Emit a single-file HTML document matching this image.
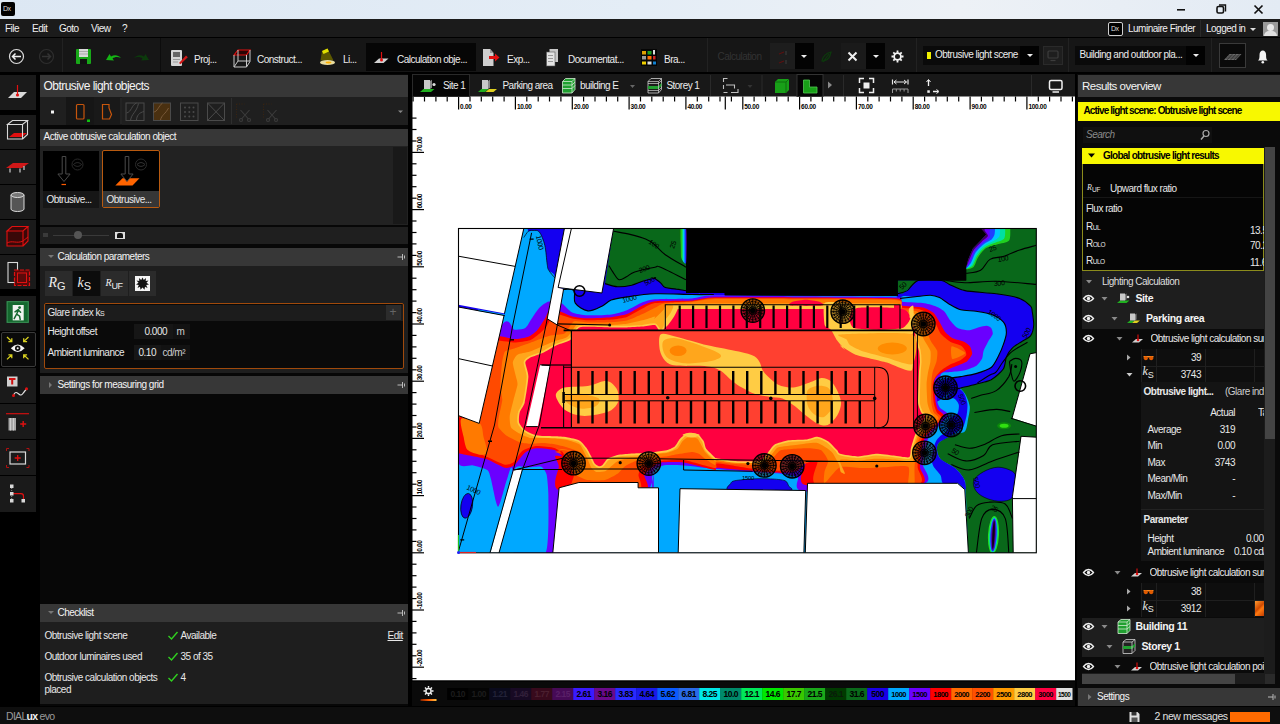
<!DOCTYPE html>
<html><head><meta charset="utf-8"><title>DIALux evo</title>
<style>
*{box-sizing:border-box;margin:0;padding:0}
html,body{width:1280px;height:724px;overflow:hidden;background:#000;font-family:"Liberation Sans",sans-serif;font-size:10px;color:#e8e8e8;letter-spacing:-0.5px}
.a{position:absolute}
.t{position:absolute;white-space:nowrap;line-height:12px}
#title{left:0;top:0;width:1280px;height:19px;background:linear-gradient(90deg,#dce7f3 0%,#e4edf6 50%,#edf1f6 75%,#e3ebf4 100%)}
#menu{left:0;top:19px;width:1280px;height:18px;background:#1b1b1b}
#tbar{left:0;top:38px;width:1280px;height:34px;background:#161616}
#strip{left:0;top:74px;width:38px;height:632px;background:#000}
#lpanel{left:39.500px;top:74px;width:368px;height:632px;background:#070707;overflow:hidden}
#view{left:412px;top:74px;width:663px;height:632px;background:#fff}
#rpanel{left:1077px;top:74px;width:203px;height:632px;background:#0a0a0a}
#status{left:0;top:706.500px;width:1280px;height:18px;background:#0e0e0e}
.m{top:3.500px;color:#f0f0f0}
.b{top:15.500px;color:#ececec}
.bb{font-weight:bold;font-size:10.500px;letter-spacing:-0.4px;color:#f4f4f4}
.r{left:100px;width:58px;text-align:right}
.hdr{position:absolute;background:#373737;color:#f2f2f2}
</style></head><body>

<div id="title" class="a">
 <div class="a" style="left:1px;top:2px;width:14px;height:14px;background:#000;border-radius:2px"></div>
 <div class="t" style="left:3px;top:4px;font-size:7px;color:#ddd;letter-spacing:-0.5px;line-height:10px">Dx</div>
 <svg class="a" style="left:1170px;top:0" width="110" height="19" viewBox="0 0 110 19">
  <rect x="7" y="9" width="8" height="1.6" fill="#111"/>
  <rect x="47" y="6.5" width="6.5" height="6.5" rx="1.5" fill="none" stroke="#111" stroke-width="1.6"/>
  <path d="M49 5h6.5v6.5" fill="none" stroke="#111" stroke-width="1.4"/>
  <path d="M84.500 5.500l8 8M92.500 5.500l-8 8" stroke="#111" stroke-width="1.700"/>
 </svg>
</div>
<div id="menu" class="a">
 <div class="t m" style="left:5px">File</div><div class="t m" style="left:32px">Edit</div><div class="t m" style="left:59px">Goto</div><div class="t m" style="left:91px">View</div><div class="t m" style="left:122px">?</div>
 <div class="a" style="left:1108px;top:3px;width:15px;height:14px;border:1px solid #cfcfcf;border-radius:2px;background:#000"></div>
 <div class="t" style="left:1111px;top:5px;font-size:7px;color:#ddd;line-height:10px;letter-spacing:-0.5px">Dx</div>
 <div class="t m" style="left:1128px">Luminaire Finder</div>
 <div class="a" style="left:1200px;top:1px;width:1px;height:17px;background:#2a2a2a"></div>
 <div class="t m" style="left:1206px">Logged in</div>
 <div class="a" style="left:1250px;top:9px;border:3px solid transparent;border-top:3px solid #ddd"></div>
 <div class="a" style="left:1263px;top:3px;width:15px;height:14px;background:#9a9a9a;overflow:hidden"><div class="a" style="left:4px;top:2px;width:7px;height:7px;border-radius:50%;background:#e8e8e8"></div><div class="a" style="left:1px;top:9px;width:13px;height:8px;border-radius:5px 5px 0 0;background:#e0e0e0"></div></div>
</div>
<div id="tbar" class="a">
 <div class="a" style="left:366px;top:5px;width:110px;height:28px;background:#060606"></div>
 <div class="a" style="left:62px;top:0;width:1px;height:34px;background:#222"></div>
 <div class="a" style="left:160px;top:0;width:1px;height:34px;background:#0c0c0c"></div>
 <div class="a" style="left:707px;top:0;width:1px;height:34px;background:#222"></div>
 <div class="a" style="left:916px;top:0;width:1px;height:34px;background:#222"></div>
 <div class="a" style="left:1068px;top:0;width:1px;height:34px;background:#222"></div>
 <div class="a" style="left:1211px;top:0;width:1px;height:34px;background:#222"></div>
 <svg class="a" style="left:0;top:0;z-index:3" width="1280" height="34" viewBox="0 38 1280 34" id="tbsvg">
  
  <circle cx="16.500" cy="56.500" r="7" fill="none" stroke="#dcdcdc" stroke-width="1.200"/>
  <path d="M21 56.500h-8M15.500 53.500l-3 3 3 3" fill="none" stroke="#f0f0f0" stroke-width="1.500"/>
  <circle cx="46.500" cy="56.500" r="7" fill="none" stroke="#2e2e2e" stroke-width="1.200"/>
  <path d="M42 56.500h8M47.500 53.500l3 3-3 3" fill="none" stroke="#333" stroke-width="1.500"/>
  <!-- save -->
  <rect x="76" y="49" width="15" height="15" rx="1" fill="#18a818"/>
  <rect x="79" y="49" width="9" height="8" fill="#d8d8d8"/><rect x="79" y="51" width="9" height="1" fill="#aaa"/><rect x="79" y="53.500" width="9" height="1" fill="#aaa"/>
  <rect x="80" y="59" width="7" height="5" fill="#111"/>
  <!-- undo/redo -->
  <path d="M106 60l3.500-6 1.500 2.500c3-2 7-2 10 1.500-3-1.500-6-1.500-8.500 .5l1.500 2z" fill="#14b414"/>
  <path d="M149 60l-3.500-6-1.500 2.500c-3-2-7-2-10 1.500 3-1.500 6-1.500 8.500 .5l-1.500 2z" fill="#0c3a0c"/>
  <!-- project -->
  <rect x="171" y="50" width="11" height="16" rx="1" fill="#d4d4d4"/><rect x="173" y="52" width="7" height="5" fill="#666"/><rect x="173" y="59" width="7" height="1" fill="#999"/><rect x="173" y="61.500" width="5" height="1" fill="#999"/>
  <path d="M179 63l7-7.500 1.800 1.800-7.300 7z" fill="#d01818"/>
  <!-- construct cube -->
  <path d="M234 55l4-5h12l-3.500 5z" fill="#2a0505" stroke="#e01010" stroke-width="1.200"/>
  <path d="M234 55v12h12.500v-12M250 50v11.500l-3.500 5.500M238 50v11l-4 6M238 61h12" fill="none" stroke="#c8c8c8" stroke-width="1"/>
  <!-- light -->
  <path d="M322 51l5.500-2.500 6 12h-13z" fill="#5c5800"/><path d="M322 51l5.500-2.500 1.500 3-5.500 2.500z" fill="#e0e000"/>
  <ellipse cx="327.500" cy="62.500" rx="7.500" ry="2.500" fill="#e8dca0"/><ellipse cx="328.500" cy="62.500" rx="3" ry="1" fill="#ffb000"/>
  <!-- calc obj -->
  <path d="M374 63l5-4.500h9.500l-5 4.500z" fill="#d0d0d0"/><path d="M381.500 52v8" stroke="#e01010" stroke-width="1.200"/><circle cx="381.500" cy="60" r="1.500" fill="#e01010"/>
  <!-- export -->
  <path d="M483 49h7l3.500 4v13h-10.500z" fill="#cfcfcf"/><path d="M490 49v4h3.500" fill="#999"/>
  <path d="M489 56h6v-2.500l4.500 4-4.500 4v-2.500h-6z" fill="#e01010"/>
  <!-- documentation -->
  <rect x="549.500" y="49" width="8.500" height="13" fill="#c8c8c8"/><rect x="546.500" y="52" width="8.500" height="14" fill="#e4e4e4" stroke="#555" stroke-width=".6"/>
  <rect x="548" y="55" width="5" height="1" fill="#999"/><rect x="548" y="58" width="5" height="1" fill="#999"/><rect x="548" y="61" width="5" height="1" fill="#999"/>
  <!-- brand grid -->
  <rect x="641" y="49" width="16" height="17" fill="#050505"/>
  <rect x="642" y="51" width="4" height="3.500" fill="#e0a000"/><rect x="647.500" y="51" width="4" height="3.500" fill="#20a020"/><rect x="653" y="50" width="2" height="4.500" fill="#ddd"/>
  <rect x="642" y="56" width="4" height="3.500" fill="#999"/><rect x="647.500" y="56" width="4" height="3.500" fill="#ff7000"/><rect x="653" y="56" width="2.500" height="3.500" fill="#d02020"/>
  <rect x="642" y="61.500" width="4" height="3" fill="#f0d000"/><rect x="647.500" y="61.500" width="4" height="3" fill="#ddd"/><rect x="653" y="61.500" width="3" height="3" fill="#1080d0"/>
  <!-- calc dim icon -->
  <path d="M779 54l5-2M779 63l5-2" stroke="#5a1010" stroke-width="1.200"/><path d="M786 51v4M786 60v4" stroke="#333" stroke-width="1.500"/>
  <!-- leaf dim -->
  <path d="M822 61c1-5 5-8 9-9-1 4-2 8-7 9zM823 62l6-8" fill="none" stroke="#0c3a0c" stroke-width="1.200"/>
  <!-- X -->
  <path d="M848.500 52.500l8 8M856.500 52.500l-8 8" stroke="#f0f0f0" stroke-width="2"/>
  <!-- gear -->
  <g transform="translate(897.500 56.500)"><circle r="3.400" fill="none" stroke="#f4f4f4" stroke-width="1.800"/><g stroke="#f4f4f4" stroke-width="1.800"><path d="M0-6v2.200M0 6v-2.200M-6 0h2.200M6 0h-2.200M-4.200-4.200l1.500 1.500M4.200 4.200l-1.500-1.500M-4.200 4.200l1.500-1.500M4.200-4.200l-1.500 1.500"/></g></g>
  <!-- monitor dim -->
  <rect x="1048" y="51" width="10" height="7" rx="1" fill="none" stroke="#3c3c3c" stroke-width="1.200"/><path d="M1050.500 60.500h5" stroke="#3c3c3c" stroke-width="1.200"/>
  <!-- plane btn -->
  <path d="M1224 60l5.500-6h12l-5.500 6z" fill="#6a6a6a"/><path d="M1227 60l5.500-6M1230.500 60l5.500-6M1234 60l5.500-6M1226 58h12M1228 56h12" stroke="#222" stroke-width=".6"/>
  <!-- bell -->
  <path d="M1258 60.500c1.500-1 1.500-3 1.500-5.500 0-3 1.500-4.500 3.300-4.500s3.300 1.500 3.300 4.500c0 2.500 0 4.500 1.500 5.500z" fill="#f4f4f4"/><circle cx="1262.800" cy="62.200" r="1.300" fill="#f4f4f4"/>

 </svg>
 <div class="t b" style="left:194px">Proj...</div>
 <div class="t b" style="left:257px">Construct...</div>
 <div class="t b" style="left:343px">Li...</div>
 <div class="t b" style="left:397px">Calculation obje...</div>
 <div class="t b" style="left:507px">Exp...</div>
 <div class="t b" style="left:568px">Documentat...</div>
 <div class="t b" style="left:664px">Bra...</div>
 <div class="t b" style="left:717.500px;top:12.500px;color:#333">Calculation</div>
 <div class="a" style="left:769.500px;top:5px;width:25.500px;height:26px;background:#1d1d1d"></div>
 <div class="a" style="left:795px;top:5px;width:18.500px;height:26px;background:#030303"></div>
 <div class="a" style="left:801px;top:17px;border:3px solid transparent;border-top:3px solid #eee"></div>
 <div class="a" style="left:841px;top:5px;width:25px;height:26px;background:#1a1a1a"></div><div class="a" style="left:866px;top:5px;width:19px;height:26px;background:#030303"></div>
 <div class="a" style="left:872.500px;top:17px;border:3px solid transparent;border-top:3px solid #eee"></div>
 <div class="a" style="left:923px;top:7.500px;width:116px;height:19px;background:#0a0a0a"></div><div class="a" style="left:1020px;top:7.500px;width:19px;height:19px;background:#020202"></div>
 <div class="a" style="left:927px;top:13.500px;width:3.500px;height:7px;background:#f0f000"></div>
 <div class="t b" style="left:935px;top:11px">Obtrusive light scene</div>
 <div class="a" style="left:1026.500px;top:15.500px;border:3px solid transparent;border-top:3px solid #eee"></div>
 <div class="a" style="left:1043px;top:7.500px;width:19.500px;height:19px;background:#1e1e1e;border:1px solid #2a2a2a"></div>
 <div class="a" style="left:1075px;top:7.500px;width:129.500px;height:19px;background:#0a0a0a"></div><div class="a" style="left:1185.500px;top:7.500px;width:19px;height:19px;background:#020202"></div>
 <div class="t b" style="left:1079.500px;top:11px">Building and outdoor pla...</div>
 <div class="a" style="left:1193px;top:15.500px;border:3px solid transparent;border-top:3px solid #eee"></div>
 <div class="a" style="left:1219px;top:5px;width:27px;height:25px;background:#0a0a0a;border:1px solid #3a3a3a"></div>
</div>

<div id="strip" class="a">
 <div class="a" style="left:0;top:0.5px;width:36px;height:35.0px;background:#1a1a1a"></div>
<div class="a" style="left:0;top:40.5px;width:36px;height:34.2px;background:#1a1a1a"></div>
<div class="a" style="left:0;top:75.7px;width:36px;height:34.2px;background:#1a1a1a"></div>
<div class="a" style="left:0;top:110.9px;width:36px;height:34.2px;background:#1a1a1a"></div>
<div class="a" style="left:0;top:146.1px;width:36px;height:34.2px;background:#1a1a1a"></div>
<div class="a" style="left:0;top:181.3px;width:36px;height:34.2px;background:#1a1a1a"></div>
<div class="a" style="left:0;top:221.5px;width:36px;height:35.2px;background:#1a1a1a"></div>
<div class="a" style="left:1px;top:257.7px;width:35px;height:35.1px;background:#0a0a0a;border:1px solid #3a3a3a;border-radius:2px"></div>
<div class="a" style="left:0;top:293.8px;width:36px;height:35.2px;background:#1a1a1a"></div>
<div class="a" style="left:0;top:330.0px;width:36px;height:35.2px;background:#1a1a1a"></div>
<div class="a" style="left:0;top:366.2px;width:36px;height:35.1px;background:#1a1a1a"></div>
<div class="a" style="left:0;top:402.3px;width:36px;height:35.5px;background:#1a1a1a"></div>
<svg class="a" style="left:0;top:0" width="38" height="632" viewBox="0 74 38 632">
 <!-- 1 calc obj -->
 <path d="M8 98l6-6h13l-6 6z" fill="#d8d8d8"/><path d="M17.500 85v10" stroke="#e01010" stroke-width="1.200"/><circle cx="17.500" cy="95" r="1.600" fill="#e01010"/>
 <!-- 2 cube with red floor -->
 <path d="M9 137l5-4h13l-5 4z" fill="#e01010"/>
 <path d="M7.500 124.500l5-4h15l-5 4zM7.500 124.500v14.500h15v-14.500M27.500 120.500v14l-5 4.500" fill="none" stroke="#d8d8d8" stroke-width="1.100"/>
 <!-- 3 table -->
 <path d="M6 168l7-5h16l-7 5z" fill="#d01818"/><path d="M10 168.500v4M20 168.500v4M24 166v4" stroke="#ccc" stroke-width="1.200"/>
 <!-- 4 cylinder -->
 <path d="M11 195v14a6.500 2.500 0 0 0 13 0v-14z" fill="#555" stroke="#d8d8d8" stroke-width="1"/><ellipse cx="17.500" cy="195" rx="6.500" ry="2.500" fill="#777" stroke="#d8d8d8" stroke-width="1"/>
 <!-- 5 red cube -->
 <path d="M7 231l5-4.500h16v14.500l-5 5h-16z" fill="#3a0808"/>
 <path d="M7 231l5-4.500h16l-5 4.500zM7 231v15h16v-15M28 226.500v14.500l-5 5" fill="none" stroke="#e01010" stroke-width="1.100"/>
 <path d="M7 243c5-3 10 1 16-2l5-4" fill="none" stroke="#e01010" stroke-width="1"/>
 <!-- 6 rooms -->
 <rect x="8" y="262.500" width="9.500" height="20" fill="none" stroke="#d8d8d8" stroke-width="1.100"/>
 <rect x="14.500" y="270" width="15" height="15.500" fill="#5a0a0a" stroke="#e01010" stroke-width="1.200" stroke-dasharray="4 1.500"/>
 <rect x="17.500" y="273" width="9" height="9.500" fill="none" stroke="#e01010" stroke-width="1"/>
 <!-- 7 exit -->
 <rect x="6.500" y="301" width="22.500" height="22" fill="#14682e"/><rect x="7.200" y="301.700" width="21" height="20.600" fill="none" stroke="#3f8f5a" stroke-width=".9"/>
 <rect x="12.700" y="305" width="11" height="15.400" fill="#f0f4f0"/>
 <circle cx="19.600" cy="307.600" r="1.400" fill="#14682e"/><path d="M18.600 309.600l-2 4.600M15 311.800l3-2 2.600 2.400M16.600 314.200l-2.400 4.400M16.600 314.200l3 2 .6 3.400" stroke="#14682e" stroke-width="1.500" fill="none" stroke-linecap="round"/>
 <!-- 8 eye -->
 <path d="M10.800 348.200Q17.700 340.800 24.700 348.200Q17.700 355.600 10.800 348.200z" fill="#f6f6f6"/><circle cx="17.700" cy="348.200" r="2.700" fill="#111"/><circle cx="17.700" cy="348.200" r="1" fill="#f6f6f6"/>
 <g stroke="#d8d020" stroke-width="1.300" fill="none"><path d="M7 337l4.600 4.400M11.800 338.200v3.400h-3.400"/><path d="M28.500 337l-4.600 4.400M23.700 338.200v3.400h3.400"/><path d="M7 359.400l4.600-4.400M11.800 358.200v-3.400h-3.400"/><path d="M28.500 359.400l-4.600-4.400M23.700 358.200v-3.400h3.400"/></g>
 <!-- 9 -->
 <rect x="7" y="376.500" width="10.500" height="10" fill="#d0d0d0"/><path d="M9 379h6.500M12.200 379v5.500" stroke="#d01010" stroke-width="2"/>
 <path d="M13.500 395c3-7 6 3 9-1s3-4 4-5" fill="none" stroke="#e4e4e4" stroke-width="1.100"/><circle cx="13.500" cy="395.500" r="1.500" fill="#e01010"/><circle cx="26.500" cy="388.700" r="1.500" fill="#e01010"/>
 <!-- 10 -->
 <path d="M6 413.700h23" stroke="#d01010" stroke-width="1.200"/><rect x="8.500" y="418" width="7.500" height="12.500" fill="#a8a8a8"/><path d="M10.500 418v12.500M13.500 418v12.500" stroke="#d8d8d8" stroke-width=".8"/><path d="M20.200 424h6M23.200 421v6" stroke="#e01010" stroke-width="1.400"/>
 <!-- 11 -->
 <rect x="10" y="452" width="15.500" height="12" fill="none" stroke="#d8d8d8" stroke-width="1.200"/><path d="M14.700 458h6M17.700 455v6" stroke="#e01010" stroke-width="1.300"/>
 <g stroke="#b01010" stroke-width="1" fill="none"><path d="M6.500 451v-2.500h2.500M29 451v-2.500h-2.500M6.500 465v2.500h2.500M29 465v2.500h-2.500"/></g>
 <!-- 12 -->
 <path d="M11.700 486v15" stroke="#aaa" stroke-width=".8" stroke-dasharray="1 1"/><path d="M13 493.700h8q2.500 0 2.500 2.500v3" fill="none" stroke="#e01010" stroke-width="1.200"/>
 <rect x="10" y="484.500" width="3.500" height="3.500" fill="#d8d8d8"/><rect x="10" y="492" width="3.500" height="3.500" fill="#d8d8d8"/><rect x="10" y="499" width="3.500" height="3.500" fill="#d8d8d8"/><rect x="21.500" y="499" width="3.500" height="3.500" fill="#d8d8d8"/>
</svg>
</div>
<div id="lpanel" class="a">
 <div class="hdr" style="left:0;top:1px;width:369px;height:22px"></div>
 <div class="t" style="left:4px;top:6px;font-size:12px;color:#f4f4f4;letter-spacing:-0.55px">Obtrusive light objects</div>
 <div class="a" style="left:0;top:23px;width:369px;height:28px;background:#1f1f1f"></div>
 <div class="a" style="left:26px;top:23px;width:28px;height:28px;background:#161616"></div>
 <div class="a" style="left:54px;top:23px;width:28px;height:28px;background:#191919"></div>
 <div class="hdr" style="left:0;top:55px;width:369px;height:17px"></div>
 <div class="t" style="left:4px;top:57px;color:#f4f4f4">Active obtrusive calculation object</div>
 <div class="a" style="left:0;top:72px;width:369px;height:79px;background:#222"></div>
 <div class="a" style="left:353px;top:73px;width:14px;height:77px;background:#191919"></div>
 <div class="a" style="left:3px;top:77px;width:56px;height:57px;background:#000"></div>
 <div class="a" style="left:3px;top:117px;width:56px;height:17px;background:#161616"></div>
 <div class="t" style="left:7px;top:120px">Obtrusive...</div>
 <div class="a" style="left:62px;top:76px;width:58px;height:58px;background:#000;border:1px solid #b85a10;border-radius:2px"></div>
 <div class="a" style="left:63px;top:117px;width:56px;height:16px;background:#363636"></div>
 <div class="t" style="left:67px;top:120px">Obtrusive...</div>
 <div class="a" style="left:0;top:153px;width:369px;height:17px;background:#1f1f1f"></div>
 <div class="a" style="left:13px;top:161px;width:56px;height:1px;background:#3a3a3a"></div>
 <div class="a" style="left:34px;top:157px;width:8px;height:8px;border-radius:50%;background:#555"></div>
 <div class="a" style="left:3px;top:159px;width:5px;height:4px;background:#3a3a3a"></div>
 <div class="a" style="left:75px;top:158px;width:10px;height:7px;background:#ddd"></div><div class="a" style="left:77px;top:159px;width:6px;height:5px;background:#111;border-radius:2px 2px 0 0"></div>
 <div class="hdr" style="left:0;top:174px;width:369px;height:18px"></div>
 <div class="a" style="left:8px;top:181px;border:3px solid transparent;border-top:3px solid #777"></div>
 <div class="t" style="left:18px;top:177px;color:#f4f4f4">Calculation parameters</div>
 <div class="a" style="left:0;top:192px;width:369px;height:107px;background:#1e1e1e"></div>
 <div class="a" style="left:5px;top:197px;width:27px;height:25px;background:#2b2b2b"></div>
 <div class="a" style="left:33px;top:197px;width:27px;height:25px;background:#0c0c0c"></div>
 <div class="a" style="left:61px;top:197px;width:27px;height:25px;background:#2b2b2b"></div>
 <div class="a" style="left:89px;top:197px;width:27px;height:25px;background:#2b2b2b"></div>
 <div class="t" style="left:9px;top:203px;font-size:14px;font-family:'Liberation Serif',serif;font-style:italic;color:#eee;letter-spacing:0">R<span style="font-size:11px;font-style:normal;font-family:'Liberation Sans',sans-serif;position:relative;top:3px">G</span></div>
 <div class="t" style="left:38px;top:203px;font-size:14px;font-family:'Liberation Serif',serif;font-style:italic;color:#eee;letter-spacing:0">k<span style="font-size:11px;font-style:normal;font-family:'Liberation Sans',sans-serif;position:relative;top:3px">S</span></div>
 <div class="t" style="left:66px;top:203px;font-size:10px;font-family:'Liberation Serif',serif;font-style:italic;color:#eee;letter-spacing:0">R<span style="font-size:9px;font-style:normal;font-family:'Liberation Sans',sans-serif;position:relative;top:3px;letter-spacing:-.5px">UF</span></div>
 <div class="a" style="left:95px;top:202px;width:15px;height:15px;background:#f4f4f4"></div>
 <svg class="a" style="left:95px;top:202px" width="15" height="15" viewBox="-7.500 -7.500 15 15"><path d="M0-6 1.300-3.500 3.500-5.500 3.200-2.600 6-3 4 -.8 6.500 1 3.700 1.500 5 4.500 2.500 3.200 2 6.300 0 4-2 6.300-2.500 3.200-5 4.500-3.700 1.500-6.500 1-4-.8-6-3-3.200-2.600-3.500-5.500-1.300-3.500z" fill="#111"/></svg>
 <div class="a" style="left:4px;top:229px;width:360px;height:66px;border:1px solid #a04a0c;background:#0a0a0a;border-radius:2px"></div>
 <div class="a" style="left:5px;top:231px;width:358px;height:16px;background:#1c1c1c"></div>
 <div class="a" style="left:346px;top:231px;width:15px;height:15px;background:#2c2c2c"></div>
 <div class="t" style="left:350px;top:232px;color:#666;font-size:12px;letter-spacing:0">+</div>
 <div class="t" style="left:8px;top:233px">Glare index k<span style="font-size:7px">S</span></div>
 <div class="t" style="left:8px;top:252px">Height offset</div>
 <div class="a" style="left:94px;top:250px;width:39px;height:15px;background:#161616"></div>
 <div class="a" style="left:133px;top:250px;width:17px;height:15px;background:#121212"></div>
 <div class="t" style="left:105px;top:252px">0.000</div><div class="t" style="left:137px;top:252px;color:#ccc">m</div>
 <div class="t" style="left:8px;top:273px">Ambient luminance</div>
 <div class="a" style="left:94px;top:271px;width:27px;height:15px;background:#161616"></div>
 <div class="a" style="left:121px;top:271px;width:29px;height:15px;background:#121212"></div>
 <div class="t" style="left:99px;top:273px">0.10</div><div class="t" style="left:123px;top:273px;color:#ccc">cd/m²</div>
 <div class="hdr" style="left:0;top:302px;width:369px;height:18px"></div>
 <div class="a" style="left:9px;top:308px;border:3px solid transparent;border-left:3px solid #777"></div>
 <div class="t" style="left:18px;top:305px;color:#f4f4f4">Settings for measuring grid</div>
 <div class="hdr" style="left:0;top:530px;width:369px;height:18px"></div>
 <div class="a" style="left:8px;top:537px;border:3px solid transparent;border-top:3px solid #777"></div>
 <div class="t" style="left:18px;top:533px;color:#f4f4f4">Checklist</div>
 <div class="a" style="left:0;top:548px;width:369px;height:82px;background:#1e1e1e"></div>
 <div class="t" style="left:5px;top:556px">Obtrusive light scene</div><div class="t" style="left:141px;top:556px">Available</div>
 <div class="t" style="left:348px;top:556px;text-decoration:underline">Edit</div>
 <div class="t" style="left:5px;top:577px">Outdoor luminaires used</div><div class="t" style="left:141px;top:577px">35 of 35</div>
 <div class="t" style="left:5px;top:598px">Obtrusive calculation objects<br>placed</div><div class="t" style="left:141px;top:598px">4</div>
 <svg class="a" style="left:0;top:0" width="369" height="632" viewBox="39.500 74 369 632">
  <g fill="none" stroke="#30d020" stroke-width="1.400"><path d="M168 636l3 3 6-7"/><path d="M168 657l3 3 6-7"/><path d="M168 678l3 3 6-7"/></g>
  <g stroke="#bbb" stroke-width="1" fill="#bbb"><path d="M397 257h5M402 254v6M404 255.500v3"/><path d="M397 385h5M402 382v6M404 383.500v3"/><path d="M397 613h5M402 610v6M404 611.500v3"/></g>
  
  <rect x="50.500" y="110.500" width="3" height="3" fill="#f4f4f4"/>
  <rect x="76" y="104.500" width="7.500" height="14.500" rx="1" fill="none" stroke="#c8560c" stroke-width="1.200"/><rect x="86.500" y="119.500" width="3" height="2.500" fill="#10c010"/>
  <path d="M102 104.500h6.500v3.500l2.500 6.500-2 4.500h-7z" fill="none" stroke="#c8560c" stroke-width="1.200"/>
  <path d="M120.500 98v26M231 98v26" stroke="#2e2e2e" stroke-width="1"/>
  <g stroke="#4a4a4a" stroke-width="1" fill="none"><rect x="125.500" y="103" width="18" height="17.500"/><path d="M126 113c5-1 5-8 10-10M130 120.500c1-7 6-8 8-17M136 120.500c0-5 3-8 7.500-9"/>
  <rect x="180" y="103" width="17.500" height="17.500"/><rect x="207" y="103" width="17" height="17.500"/><path d="M207 103l17 17.500M224 103l-17 17.500"/></g>
  <rect x="153" y="103" width="17" height="17.500" fill="#4a3010" stroke="#4a4a4a"/><path d="M153 112c4 0 5-6 9-9M160 120c1-5 5-6 8-12" stroke="#7a5a3a" fill="none"/>
  <g fill="#4a4a4a"><circle cx="184.500" cy="107.500" r="1"/><circle cx="188.800" cy="107.500" r="1"/><circle cx="193" cy="107.500" r="1"/><circle cx="184.500" cy="112" r="1"/><circle cx="188.800" cy="112" r="1"/><circle cx="193" cy="112" r="1"/><circle cx="184.500" cy="116.500" r="1"/><circle cx="188.800" cy="116.500" r="1"/><circle cx="193" cy="116.500" r="1"/></g>
  <g stroke="#3c3c3c" stroke-width="1.100" fill="none"><path d="M240 110l8 9M249 110l-8 9"/><circle cx="248.500" cy="120" r="1.500"/><circle cx="240.500" cy="120" r="1.500"/><path d="M267 110l8 9M276 110l-8 9"/><circle cx="275.500" cy="120" r="1.500"/><circle cx="267.500" cy="120" r="1.500"/></g>
  <g stroke="#3a2410" stroke-width="1" fill="none" stroke-dasharray="1 1.500"><path d="M236 104v14M236 104h8"/><path d="M263 104v14M263 104h8"/></g>
  <path d="M397.500 110.500l2.500 2.500 2.500-2.500z" fill="#888"/>
  <!-- thumbnails -->
  <g fill="none" stroke="#4a4a4a" stroke-width="1"><path d="M61.700 156.500h3.600v17.500h4.300l-6.100 7.500-6.100-7.500h4.300z"/><circle cx="77" cy="164.500" r="5.500" stroke="#2a2a2a"/><path d="M73 164.500c2.500-2.500 5.500-2.500 8 0-2.500 2.500-5.500 2.500-8 0z" stroke="#333"/></g>
  <path d="M61 184.500h4.500" stroke="#ff5a00" stroke-width="1.200"/>
  <path d="M114.800 185.400h17.200l7-7.200h-17z" fill="#ff6400"/>
  <g fill="none" stroke="#4a4a4a" stroke-width="1"><path d="M124.700 156.500h3.600v17.500h4.300l-6.100 7.500-6.100-7.500h4.300z" fill="#000"/><circle cx="140.500" cy="164.500" r="5.500" stroke="#2a2a2a"/><path d="M136.500 164.500c2.500-2.500 5.500-2.500 8 0-2.500 2.500-5.500 2.500-8 0z" stroke="#333"/></g>

 </svg>
</div>
<div id="view" class="a">
<svg class="a" style="left:0;top:0" width="663" height="632" viewBox="412 74 663 632">
<rect x="410" y="96" width="2.500" height="588" fill="#000"/>
<g stroke="#000" stroke-width="1.200"><path d="M413.1 96.500v5"/><path d="M424.5 96.500v5"/><path d="M435.9 96.500v5"/><path d="M447.2 96.500v5"/><path d="M458.6 96.500v13"/><path d="M470.0 96.500v5"/><path d="M481.3 96.500v5"/><path d="M492.7 96.500v5"/><path d="M504.1 96.500v5"/><path d="M515.4 96.500v13"/><path d="M526.8 96.500v5"/><path d="M538.2 96.500v5"/><path d="M549.5 96.500v5"/><path d="M560.9 96.500v5"/><path d="M572.3 96.500v13"/><path d="M583.6 96.500v5"/><path d="M595.0 96.500v5"/><path d="M606.4 96.500v5"/><path d="M617.7 96.500v5"/><path d="M629.1 96.500v13"/><path d="M640.5 96.500v5"/><path d="M651.8 96.500v5"/><path d="M663.2 96.500v5"/><path d="M674.6 96.500v5"/><path d="M685.9 96.500v13"/><path d="M697.3 96.500v5"/><path d="M708.7 96.500v5"/><path d="M720.0 96.500v5"/><path d="M731.4 96.500v5"/><path d="M742.8 96.500v13"/><path d="M754.1 96.500v5"/><path d="M765.5 96.500v5"/><path d="M776.8 96.500v5"/><path d="M788.2 96.500v5"/><path d="M799.6 96.500v13"/><path d="M810.9 96.500v5"/><path d="M822.3 96.500v5"/><path d="M833.7 96.500v5"/><path d="M845.0 96.500v5"/><path d="M856.4 96.500v13"/><path d="M867.8 96.500v5"/><path d="M879.1 96.500v5"/><path d="M890.5 96.500v5"/><path d="M901.9 96.500v5"/><path d="M913.2 96.500v13"/><path d="M924.6 96.500v5"/><path d="M936.0 96.500v5"/><path d="M947.3 96.500v5"/><path d="M958.7 96.500v5"/><path d="M970.1 96.500v13"/><path d="M981.4 96.500v5"/><path d="M992.8 96.500v5"/><path d="M1004.2 96.500v5"/><path d="M1015.5 96.500v5"/><path d="M1026.9 96.500v13"/><path d="M1038.3 96.500v5"/><path d="M1049.6 96.500v5"/><path d="M1061.0 96.500v5"/><path d="M1072.4 96.500v5"/><path d="M725.300 96.500v13"/><path d="M411 118.1h5.500"/><path d="M411 129.5h5.500"/><path d="M411 141.0h5.500"/><path d="M411 152.4h13"/><path d="M411 163.8h5.500"/><path d="M411 175.3h5.500"/><path d="M411 186.7h5.500"/><path d="M411 198.2h5.500"/><path d="M411 209.6h13"/><path d="M411 221.0h5.500"/><path d="M411 232.5h5.500"/><path d="M411 243.9h5.500"/><path d="M411 255.4h5.500"/><path d="M411 266.8h13"/><path d="M411 278.2h5.500"/><path d="M411 289.7h5.500"/><path d="M411 301.1h5.500"/><path d="M411 312.6h5.500"/><path d="M411 324.0h13"/><path d="M411 335.4h5.500"/><path d="M411 346.9h5.500"/><path d="M411 358.3h5.500"/><path d="M411 369.8h5.500"/><path d="M411 381.2h13"/><path d="M411 392.6h5.500"/><path d="M411 404.1h5.500"/><path d="M411 415.5h5.500"/><path d="M411 427.0h5.500"/><path d="M411 438.4h13"/><path d="M411 449.8h5.500"/><path d="M411 461.3h5.500"/><path d="M411 472.7h5.500"/><path d="M411 484.2h5.500"/><path d="M411 495.6h13"/><path d="M411 507.0h5.500"/><path d="M411 518.5h5.500"/><path d="M411 529.9h5.500"/><path d="M411 541.4h5.500"/><path d="M411 552.8h13"/><path d="M411 564.2h5.500"/><path d="M411 575.7h5.500"/><path d="M411 587.1h5.500"/><path d="M411 598.6h5.500"/><path d="M411 610.0h13"/><path d="M411 621.4h5.500"/><path d="M411 632.9h5.500"/><path d="M411 644.3h5.500"/><path d="M411 655.8h5.500"/><path d="M411 667.2h13"/><path d="M411 678.6h5.500"/></g><g font-size="6.500" font-weight="bold" fill="#000" font-family="Liberation Sans, sans-serif" letter-spacing="-0.300"><text x="460.1" y="108.500">0.00</text><text x="516.9" y="108.500">10.00</text><text x="573.8" y="108.500">20.00</text><text x="630.6" y="108.500">30.00</text><text x="687.4" y="108.500">40.00</text><text x="744.2" y="108.500">50.00</text><text x="801.1" y="108.500">60.00</text><text x="857.9" y="108.500">70.00</text><text x="914.7" y="108.500">80.00</text><text x="971.6" y="108.500">90.00</text><text x="1028.4" y="108.500">100.00</text><text transform="translate(421.500 151.4) rotate(-90)">70.00</text><text transform="translate(421.500 208.6) rotate(-90)">60.00</text><text transform="translate(421.500 265.8) rotate(-90)">50.00</text><text transform="translate(421.500 323.0) rotate(-90)">40.00</text><text transform="translate(421.500 380.2) rotate(-90)">30.00</text><text transform="translate(421.500 437.4) rotate(-90)">20.00</text><text transform="translate(421.500 494.6) rotate(-90)">10.00</text><text transform="translate(421.500 551.8) rotate(-90)">0.00</text><text transform="translate(421.500 609.0) rotate(-90)">-10.00</text><text transform="translate(421.500 666.2) rotate(-90)">-20.00</text></g>
<clipPath id="pc"><rect x="458.5" y="228.5" width="577.8" height="324.29999999999995"/></clipPath><g clip-path="url(#pc)">
<rect x="458.5" y="228.5" width="577.8" height="324.29999999999995" fill="#00a8ff"/>
<path d="M520.0 228.0L700.0 228.0L700.0 316.0L560.0 316.0L554.0 278.0z" fill="#1400f0" />
<path d="M501.9 335.0C498.8 317.4 519.3 246.7 523.8 229.4C528.2 212.1 526.9 231.1 528.4 231.2C530.0 231.4 531.3 230.3 533.1 230.5C534.9 230.6 537.4 229.6 539.4 232.0C541.3 234.5 543.5 240.0 544.8 245.3C546.1 250.7 546.5 259.9 547.2 264.1C547.8 268.2 547.4 268.0 548.8 270.3C550.1 272.7 555.0 272.7 555.0 278.1C555.0 283.6 550.8 293.6 548.8 303.1C546.7 312.6 550.3 329.7 542.5 335.0C534.7 340.3 505.0 352.6 501.9 335.0z" fill="#00a8ff" />
<path d="M562.8 289.4C565.8 282.8 571.7 288.3 573.8 290.6C575.8 292.9 573.0 299.7 575.3 303.1C577.7 306.5 583.4 310.4 587.8 310.9C592.2 311.5 598.0 308.1 601.9 306.2C605.8 304.4 607.1 301.6 611.2 300.0C615.4 298.4 619.6 297.9 626.9 296.9C634.2 295.8 644.2 294.1 655.0 293.8C665.8 293.4 682.1 294.4 691.9 294.5C701.7 294.7 710.1 288.6 713.8 294.5C717.4 300.4 740.3 324.1 714.0 330.0C687.7 335.9 581.2 336.8 556.0 330.0C530.8 323.2 559.9 295.9 562.8 289.4z" fill="#00a8ff" />
<path d="M897.8 293.8C899.2 292.5 904.5 292.4 907.2 290.6C909.9 288.9 913.5 281.8 918.1 280.5C922.7 279.1 937.4 279.9 941.6 280.5C945.7 281.0 946.2 283.0 949.4 284.4C952.5 285.7 958.8 289.4 965.0 290.6C971.2 291.9 989.0 292.7 996.2 293.8C1003.5 294.8 1015.1 296.8 1019.7 298.4C1024.3 300.1 1029.0 304.5 1030.6 306.2C1032.3 308.0 1031.8 308.8 1032.2 311.3C1032.6 313.8 1033.9 321.7 1033.7 325.0C1033.5 328.2 1032.3 333.4 1030.7 335.6C1029.1 337.8 1024.0 340.1 1021.6 341.7C1019.1 343.3 1014.5 345.7 1012.5 347.8C1010.4 349.8 1007.6 354.0 1006.4 356.9C1005.2 359.7 1005.4 366.0 1003.3 369.0C1001.3 372.1 994.8 377.6 991.2 379.7C987.5 381.7 980.0 383.1 976.0 384.2C971.9 385.3 964.0 387.2 960.8 388.0C957.5 388.8 955.8 388.7 951.7 390.3C947.6 391.9 936.9 408.0 930.0 400.0C923.1 392.0 904.4 343.3 900.0 330.0C895.6 316.7 897.3 304.8 897.0 300.0C896.7 295.2 896.5 295.0 897.8 293.8z" fill="#1400f0" />
<path d="M900.0 298.4C902.0 293.9 911.1 297.2 915.2 296.8C919.3 296.4 927.2 295.2 930.4 295.3C933.6 295.4 937.1 296.5 939.5 297.6C941.9 298.7 945.8 302.1 948.6 303.7C951.5 305.3 957.1 308.7 960.8 309.8C964.4 310.8 971.9 310.7 976.0 311.3C980.0 311.9 987.5 312.9 991.2 314.3C994.8 315.7 1001.3 319.5 1003.3 321.9C1005.4 324.3 1006.4 329.5 1006.4 332.6C1006.4 335.6 1004.4 341.7 1003.3 344.7C1002.3 347.8 1000.4 352.3 998.8 355.3C997.2 358.4 994.2 365.1 991.2 367.5C988.1 369.9 980.0 372.4 976.0 373.6C971.9 374.8 964.2 376.0 960.8 376.6C957.3 377.2 954.9 377.7 950.2 378.1C945.4 378.6 931.7 386.4 925.0 380.0C918.3 373.6 903.3 340.9 900.0 330.0C896.7 319.1 898.0 302.8 900.0 298.4z" fill="#00a8ff" />
<path d="M700.0 292.0L900.0 292.0L900.0 296.2L700.0 295.0z" fill="#1400f0" />
<path d="M613.6 228L690 228L690 290.6L685.9 290.6C684.3 290.4 679.7 289.6 676.2 289.1C672.8 288.5 667.9 288.5 665.3 287.5C662.7 286.5 662.4 284.4 660.6 282.8C658.8 281.2 657.0 278.6 654.4 278.1C651.8 277.6 647.0 279.2 645.0 279.7C643.0 280.2 644.7 280.3 642.5 281.2C640.3 282.2 635.7 284.2 631.6 285.2C627.4 286.1 621.9 287.0 617.5 286.7C613.1 286.5 607.1 284.1 605.0 283.6z" fill="#09681a" />
<path d="M897.8 280.5L918.1 280.5L902.5 293.8L897.8 292.2z" fill="#09681a" />
<path d="M941.6 280.0C942.7 280.7 945.9 282.8 949.4 284.4C952.9 286.0 958.0 289.2 965.0 290.6C972.0 292.0 988.0 292.6 996.2 293.8C1004.5 294.9 1014.5 296.6 1019.7 298.4C1024.8 300.3 1028.7 304.3 1030.6 306.2C1032.5 308.2 1031.8 308.5 1032.2 311.3C1032.7 314.1 1034.0 321.3 1033.7 325.0C1033.5 328.6 1032.5 333.1 1030.7 335.6C1028.9 338.1 1024.3 339.8 1021.6 341.7C1018.8 343.5 1014.7 345.5 1012.5 347.8C1010.2 350.0 1007.8 353.7 1006.4 356.9C1005.0 360.1 1005.6 365.6 1003.3 369.0C1001.1 372.4 995.3 377.4 991.2 379.7C987.1 381.9 980.5 383.0 976.0 384.2C971.4 385.5 963.8 387.2 960.8 388.0C957.8 388.8 956.5 389.6 956.2 389.5C955.9 389.5 957.4 386.9 958.8 387.5C960.1 388.1 963.4 390.9 965.0 393.8C966.6 396.6 969.2 402.5 969.7 406.2C970.2 410.0 968.8 415.0 968.1 418.8C967.4 422.5 967.0 429.0 965.0 431.2C963.0 433.5 958.6 432.5 954.9 434.0C951.2 435.5 943.2 439.0 940.5 441.2C937.8 443.3 936.9 445.6 936.9 448.3C936.9 451.0 937.8 456.1 940.5 459.1C943.2 462.1 951.4 465.1 954.9 468.1C958.4 471.1 962.3 475.6 963.9 478.9C965.5 482.1 965.0 478.5 965.7 489.6C966.3 500.7 968.0 543.3 968.4 552.8L1040 556L1040 225L941.6 225z" fill="#09681a" />
<path d="M973.8 480.7C974.9 477.4 979.6 473.9 983.6 471.7C987.7 469.4 993.2 467.3 998.0 467.2C1002.8 467.1 1009.4 469.4 1012.4 471.3C1015.3 473.3 1015.5 474.6 1015.6 478.9C1015.6 483.1 1015.0 493.1 1012.7 496.8C1010.4 500.6 1005.8 501.0 1001.6 501.3C997.3 501.6 991.4 500.3 987.2 498.6C983.0 497.0 978.7 494.4 976.4 491.4C974.2 488.4 972.6 483.9 973.8 480.7z" fill="#1400f0" stroke="#000" stroke-width="0.6"/>
<ellipse cx="1004.1" cy="425.8" rx="7" ry="3.5" fill="#0c8a0c"/><ellipse cx="1004.1" cy="425.8" rx="4.5" ry="2" fill="#30e010"/>
<ellipse cx="993.5" cy="534.9" rx="5.5" ry="19" fill="#20e020" transform="rotate(3 993.5 534.9)"/>
<ellipse cx="993.5" cy="534.9" rx="4.2" ry="17.5" fill="#00d0d0" transform="rotate(3 993.5 534.9)"/>
<ellipse cx="993.5" cy="534.9" rx="3.2" ry="16.5" fill="#2030ff" transform="rotate(3 993.5 534.9)"/>
<ellipse cx="993.5" cy="534.9" rx="2.2" ry="15.5" fill="#5000a0" transform="rotate(3 993.5 534.9)"/>
<ellipse cx="993.5" cy="534.9" rx="1.2" ry="14" fill="#100010" transform="rotate(3 993.5 534.9)"/>
<path d="M955.6 387.5C957.9 386.7 961.9 390.1 963.4 392.2C965.0 394.3 966.9 400.0 967.3 403.1C967.8 406.2 967.1 412.5 966.6 415.6C966.0 418.8 964.5 424.6 963.4 426.6C962.4 428.5 960.6 428.9 958.5 430.4C956.4 431.9 950.4 435.9 947.7 437.6C945.1 439.2 940.2 441.3 938.7 443.0C937.3 444.6 936.7 448.0 936.9 450.1C937.2 452.3 938.1 456.7 940.5 459.1C942.9 461.5 951.8 465.5 954.9 468.1C958.0 470.7 962.4 476.0 963.9 478.9C965.3 481.7 966.5 489.0 965.7 489.6C964.8 490.2 960.6 484.2 957.6 483.3C954.6 482.5 945.5 484.4 943.2 483.3C941.0 482.3 941.9 477.5 940.5 475.3C939.2 473.0 934.6 468.7 933.4 466.3C932.2 463.9 931.3 460.4 931.6 457.3C931.8 454.2 934.0 445.8 935.2 443.0C936.3 440.1 938.9 437.4 940.5 435.8C942.2 434.1 946.5 432.7 947.7 430.4C948.9 428.1 948.1 420.9 949.4 418.8C950.6 416.6 955.9 415.9 957.2 414.1C958.4 412.2 959.2 406.8 958.8 404.7C958.3 402.6 955.7 399.3 954.1 398.4C952.4 397.6 946.0 399.9 946.2 398.4C946.5 397.0 953.3 388.3 955.6 387.5z" fill="#1400f0" />
<ellipse cx="466.7" cy="505.8" rx="5.8" ry="12.5" fill="#1400f0" stroke="#000" stroke-width="0.7" transform="rotate(8 466.7 505.8)"/>
<path d="M730.3 490.5C722.6 489.6 730.2 484.7 730.8 483.3C731.4 482.0 731.8 481.3 734.8 480.7C737.7 480.1 747.9 479.1 752.7 478.9C757.5 478.6 766.4 478.6 770.7 478.9C775.0 479.1 782.6 479.7 785.0 480.7C787.4 481.6 788.1 484.7 788.6 486.0C789.1 487.4 796.4 489.9 788.6 490.5C780.8 491.1 738.0 491.5 730.3 490.5z" fill="#1400f0" stroke="#000" stroke-width="0.6"/>
<path d="M501.9 325.0C509.4 314.5 511.6 329.3 514.4 329.7C517.1 330.1 523.3 329.4 525.3 328.1C527.3 326.8 529.9 321.1 531.6 318.8C533.2 316.4 537.4 309.8 539.4 307.8C541.4 305.8 546.2 302.1 548.8 301.6C551.3 301.0 558.5 301.8 561.2 303.1C564.0 304.4 569.1 311.1 572.2 312.5C575.3 313.9 583.3 315.1 587.8 315.3C592.4 315.5 606.7 315.0 611.2 314.4C615.8 313.8 623.2 311.6 626.9 310.2C630.5 308.8 639.2 303.6 642.5 302.3C645.8 301.1 649.2 299.7 655.0 299.2C660.8 298.8 685.0 298.9 691.9 298.4C698.7 298.0 701.1 295.6 713.8 295.3C726.4 295.1 778.6 296.1 800.0 296.3C821.4 296.5 885.3 296.7 897.0 297.3C908.7 297.9 897.0 300.7 900.0 301.4C903.0 302.1 918.7 302.4 922.8 302.9C926.9 303.4 932.5 305.0 935.0 306.0C937.4 306.9 942.3 309.6 944.1 311.3C945.8 313.0 948.6 318.4 950.2 320.4C951.7 322.3 955.6 326.8 957.8 328.0C959.9 329.1 965.9 330.4 968.4 330.3C970.9 330.2 976.9 327.8 979.0 327.2C981.2 326.7 985.2 325.6 986.6 325.7C988.0 325.8 990.5 327.0 991.2 328.0C991.9 329.0 993.1 332.5 992.7 334.1C992.4 335.7 989.2 339.7 988.1 341.7C987.1 343.6 984.3 348.8 983.6 350.8C982.9 352.7 983.0 356.6 982.1 358.4C981.2 360.2 978.1 364.6 976.0 366.0C973.9 367.4 966.8 369.8 963.8 370.5C960.8 371.3 952.8 371.6 950.2 372.1C947.5 372.5 942.6 371.3 941.0 374.3C939.5 377.4 937.0 394.5 936.9 398.4C936.8 402.3 938.7 405.8 940.0 407.8C941.3 409.8 949.0 412.4 947.8 415.6C946.6 418.9 932.4 432.0 929.8 435.8C927.1 439.6 926.1 445.0 925.3 448.3C924.5 451.7 923.3 460.3 922.9 464.5C922.6 468.7 936.0 481.1 922.2 484.2C908.4 487.4 819.3 492.3 804.8 491.4C790.2 490.6 800.3 479.1 797.6 477.1C794.9 475.0 786.7 474.4 781.4 473.8C776.2 473.2 760.3 472.6 752.7 472.0C745.2 471.5 724.9 469.8 716.8 469.0C708.7 468.2 689.9 465.8 683.6 465.4C677.3 465.0 666.5 464.6 663.0 465.4C659.4 466.2 654.3 469.4 653.1 472.0C651.8 474.7 652.1 485.7 652.2 487.8C652.3 489.9 653.6 491.2 653.8 490.0C653.9 488.8 653.6 480.1 653.8 477.5C653.9 474.9 656.3 465.5 655.0 467.5C653.7 469.5 653.7 491.8 642.5 495.0C631.3 498.2 568.5 487.6 558.8 495.0C549.0 502.4 564.1 550.6 559.0 558.0C553.9 565.4 520.4 568.2 515.0 558.0C509.6 547.8 513.4 480.0 512.5 470.8C511.5 461.5 508.7 474.7 507.1 478.9C505.4 483.0 500.0 506.7 498.1 506.7C496.2 506.7 492.2 483.2 490.9 478.9C489.6 474.6 489.4 471.5 487.3 469.9C485.2 468.3 476.3 466.1 473.0 465.4C469.6 464.7 461.3 468.9 458.6 463.6C455.9 458.3 445.0 436.2 450.0 420.0C455.0 403.8 494.4 335.5 501.9 325.0z" fill="#6a00ff" />
<path d="M548.4 466.3L560.9 466.3L560.0 487.8L553.4 552.8L545.7 552.8L548.4 496.8z" fill="#6a00ff" />
<path d="M514.2 470.2C516.6 463.1 524.6 468.0 526.8 467.7C529.1 467.4 539.5 466.1 541.2 466.7C542.8 467.2 546.0 471.9 546.6 474.4C547.2 476.9 548.5 490.2 548.4 496.8C548.3 503.4 549.5 548.8 545.3 553.5C541.1 558.3 500.7 560.5 498.1 553.5C495.5 546.6 511.9 477.4 514.2 470.2z" fill="#00a8ff" />
<path d="M452.0 453.0C451.3 441.1 447.3 345.7 452.0 334.0C456.7 322.3 492.5 335.4 498.8 335.9C505.0 336.4 511.4 339.0 514.4 339.1C517.3 339.1 526.2 337.6 528.4 336.7C530.7 335.9 535.4 332.3 537.0 330.5C538.7 328.7 543.6 320.8 544.8 318.8C546.1 316.7 548.0 310.9 549.5 310.2C551.0 309.4 557.4 310.6 559.7 311.2C562.0 311.9 569.4 315.7 572.2 316.4C575.0 317.1 583.9 318.2 587.8 318.3C591.7 318.4 607.3 317.6 611.2 317.2C615.2 316.8 623.8 315.2 626.9 314.1C630.0 312.9 639.7 306.8 642.5 305.5C645.3 304.2 650.1 301.8 655.0 301.2C659.9 300.8 685.8 300.9 691.9 300.5C697.9 300.1 704.5 297.7 715.3 297.3C726.1 297.0 781.8 297.3 800.0 297.4C818.2 297.5 887.0 297.6 897.0 298.4C907.0 299.2 897.4 304.3 900.0 305.2C902.6 306.1 919.5 306.7 922.8 307.5C926.1 308.2 931.8 311.4 933.4 312.8C935.1 314.2 938.3 319.9 939.5 321.9C940.7 323.9 944.2 330.9 945.6 332.6C947.0 334.2 951.4 337.7 953.2 338.6C955.0 339.5 962.2 340.9 963.8 341.7C965.5 342.4 969.1 345.0 969.9 346.2C970.7 347.4 972.5 352.3 972.2 353.8C971.9 355.3 968.5 360.2 966.9 361.4C965.3 362.6 958.4 365.1 956.2 366.0C954.1 366.9 947.4 369.6 945.6 370.5C943.8 371.5 939.1 374.0 938.0 375.1C936.9 376.2 934.5 378.7 934.2 381.2C933.9 383.7 935.0 397.2 935.3 400.0C935.7 402.8 936.8 407.7 937.7 409.4C938.5 411.0 945.1 413.8 943.9 416.4C942.8 419.0 928.4 432.6 926.2 435.8C924.0 439.0 922.3 445.2 921.7 448.3C921.1 451.5 920.1 463.6 919.9 467.2C919.7 470.8 931.3 482.5 919.9 484.2C908.5 486.0 817.1 487.3 805.7 485.1C794.3 483.0 806.5 464.1 805.7 462.7C804.9 461.3 800.0 469.8 797.6 470.8C795.2 471.8 785.9 472.9 781.4 472.9C777.0 472.9 759.2 471.3 752.7 470.8C746.3 470.3 720.6 467.8 716.8 467.7C713.0 467.7 718.3 470.5 715.0 470.0C711.7 469.5 689.1 463.2 683.8 462.5C678.4 461.8 664.2 462.1 661.2 462.5C658.2 462.9 655.4 465.0 653.8 466.2C652.1 467.5 645.3 472.6 644.4 475.0C643.4 477.4 652.9 488.5 644.4 490.0C635.8 491.5 567.3 492.4 558.8 490.0C550.2 487.6 559.1 469.6 558.8 466.2C558.4 462.9 554.7 457.3 555.0 456.2C555.3 455.2 562.0 456.8 562.0 456.2C561.9 455.6 557.1 450.8 554.5 450.0C551.9 449.2 538.8 448.0 535.8 448.3C532.9 448.5 526.8 451.2 524.7 452.9C522.5 454.6 516.1 463.8 514.1 465.3C512.1 466.8 507.5 468.4 504.8 467.8C502.0 467.2 490.7 460.5 486.1 459.1C481.5 457.6 462.1 454.1 458.7 453.5C455.3 452.9 452.7 464.9 452.0 453.0z" fill="#ff0000" />
<path d="M452.0 415.0C450.6 407.4 447.5 347.4 452.0 340.0C456.5 332.6 490.9 340.4 497.2 340.6C503.4 340.9 511.1 342.5 514.4 342.5C517.7 342.5 527.4 341.2 530.0 340.3C532.6 339.4 538.5 334.5 540.2 333.1C541.8 331.8 544.9 328.5 546.4 326.6C547.9 324.7 552.4 314.9 555.0 314.1C557.6 313.2 568.9 317.8 572.2 318.4C575.5 319.0 583.9 320.0 587.8 320.2C591.7 320.3 607.3 319.9 611.2 319.5C615.2 319.2 623.8 318.0 626.9 316.9C630.0 315.8 639.7 310.0 642.5 308.6C645.3 307.2 650.1 303.9 655.0 303.1C659.9 302.4 685.8 301.8 691.9 301.2C697.9 300.8 704.5 298.4 715.3 298.1C726.1 297.8 781.8 298.2 800.0 298.3C818.2 298.4 887.0 298.3 897.0 299.2C907.0 300.1 897.9 306.5 900.0 307.5C902.1 308.5 915.2 308.3 918.2 309.0C921.3 309.7 928.6 312.9 930.4 314.3C932.1 315.8 934.7 321.5 935.7 323.4C936.8 325.4 939.6 332.2 941.0 334.1C942.5 335.9 948.2 340.5 950.2 341.7C952.1 342.8 959.3 344.6 960.8 345.5C962.3 346.4 964.8 349.8 965.3 350.8C965.9 351.8 966.6 354.4 966.1 355.3C965.7 356.3 962.4 359.0 960.8 359.9C959.2 360.8 952.1 363.4 950.2 364.5C948.2 365.5 942.5 369.3 941.0 370.5C939.6 371.8 936.6 375.3 935.7 376.6C934.9 378.0 932.9 381.6 932.7 384.2C932.5 386.9 933.3 400.3 933.8 403.1C934.2 406.0 936.1 410.9 936.9 412.5C937.7 414.1 942.9 416.4 941.6 418.8C940.2 421.1 925.7 432.8 923.5 435.8C921.2 438.7 919.6 445.2 919.0 448.3C918.4 451.5 917.7 463.6 917.6 467.2C917.4 470.8 927.6 482.5 917.6 484.2C907.5 486.0 827.4 487.4 817.4 485.1C807.3 482.9 818.4 464.0 817.4 461.8C816.3 459.6 808.6 462.3 806.6 463.1C804.6 463.8 800.1 468.2 797.6 469.0C795.1 469.8 785.9 470.8 781.4 470.8C777.0 470.7 757.4 469.1 752.7 468.6C748.1 468.1 738.4 466.4 734.8 465.9C731.2 465.4 718.8 463.4 716.8 463.6C714.8 463.8 718.3 468.5 715.0 468.1C711.7 467.8 689.1 460.7 683.8 460.0C678.4 459.3 665.4 460.4 661.2 461.0C657.1 461.6 644.8 464.9 642.5 466.2C640.2 467.6 638.9 472.6 638.5 475.0C638.1 477.4 645.0 488.5 638.5 490.0C632.0 491.5 580.2 491.5 573.8 490.0C567.3 488.5 574.4 477.8 573.8 475.0C573.1 472.2 568.6 464.8 567.5 462.5C566.4 460.2 563.8 452.9 562.5 451.9C561.2 450.8 555.1 451.7 555.0 451.9C554.9 452.0 562.0 453.9 562.0 453.5C561.9 453.1 557.1 448.6 554.5 447.9C551.9 447.1 539.1 445.7 535.8 446.0C532.6 446.3 524.4 449.4 522.2 451.0C519.9 452.6 515.2 460.8 513.5 462.2C511.7 463.6 507.5 465.2 504.8 464.7C502.0 464.1 489.6 458.1 486.1 456.6C482.6 455.1 471.9 451.7 469.9 449.8C467.9 447.8 466.6 440.7 466.2 437.3C465.8 434.0 467.6 418.4 466.2 416.2C464.8 413.9 453.4 422.6 452.0 415.0z" fill="#ff4a00" />
<path d="M500.3 387.5C500.3 383.9 501.4 367.7 501.9 364.1C502.3 360.5 503.8 353.1 505.0 351.6C506.2 350.0 512.3 349.1 514.4 348.4C516.4 347.7 521.9 345.8 525.3 344.5C528.8 343.3 544.8 337.0 548.8 335.9C552.7 334.8 561.9 335.0 564.4 333.6C566.9 332.2 571.4 322.7 573.8 321.6C576.1 320.5 584.1 322.4 587.8 322.5C591.6 322.6 607.3 322.4 611.2 322.2C615.2 322.0 623.8 321.4 626.9 320.6C630.0 319.8 639.7 315.3 642.5 314.1C645.3 312.8 653.0 308.8 655.0 307.8C657.0 306.8 660.1 304.4 662.2 303.9C664.3 303.4 673.3 303.0 676.2 302.8C679.2 302.6 688.0 302.4 691.9 302.0C695.8 301.7 704.5 299.3 715.3 299.1C726.1 298.8 781.8 299.2 800.0 299.3C818.2 299.4 887.0 299.2 897.0 300.2C907.0 301.2 898.0 308.6 900.0 309.8C902.0 310.9 914.4 310.2 916.7 311.3C919.0 312.3 921.4 317.5 922.8 320.4C924.2 323.3 929.0 337.1 930.4 340.2C931.8 343.2 936.6 348.7 937.2 350.8C937.8 352.9 936.9 359.3 936.5 361.4C936.0 363.6 933.2 369.8 932.7 372.1C932.1 374.3 931.3 381.1 931.2 384.2C931.0 387.3 931.1 400.3 931.4 403.1C931.7 406.0 933.0 410.9 933.8 412.5C934.5 414.1 939.7 416.4 938.4 418.8C937.1 421.1 923.0 432.8 920.8 435.8C918.6 438.7 916.9 445.1 916.3 448.3C915.7 451.6 914.7 464.5 914.5 468.1C914.3 471.7 915.1 482.6 914.5 484.2C913.9 485.9 908.9 486.0 908.2 484.2C907.6 482.5 910.6 468.4 908.2 466.7C905.9 464.9 889.4 467.0 884.9 467.2C880.4 467.3 867.8 468.1 863.3 468.1C858.9 468.1 843.9 465.7 840.0 467.2C836.1 468.7 826.1 482.9 824.5 483.3C823.0 483.8 824.2 473.9 824.5 471.7C824.9 469.4 828.5 463.1 828.1 460.9C827.8 458.8 823.1 451.4 820.9 450.1C818.8 448.9 810.5 448.3 806.6 448.3C802.6 448.3 784.7 449.3 781.4 450.1C778.2 450.9 776.4 454.9 774.3 456.4C772.1 457.9 763.9 464.1 759.9 464.9C756.0 465.6 739.1 464.4 734.8 464.1C730.5 463.8 718.8 461.7 716.8 461.8C714.8 461.9 716.2 465.3 715.0 465.0C713.8 464.7 706.6 459.9 705.0 458.8C703.4 457.6 700.0 454.4 698.8 453.8C697.5 453.1 694.4 451.9 692.5 451.9C690.6 451.9 682.5 453.3 680.0 453.8C677.5 454.2 670.0 455.9 667.5 456.2C665.0 456.6 657.5 457.4 655.0 457.8C652.5 458.1 644.5 459.0 642.5 459.4C640.5 459.7 636.8 460.6 635.0 461.2C633.2 461.9 626.8 465.0 625.0 466.2C623.2 467.5 619.5 472.4 617.5 473.8C615.5 475.1 608.0 479.4 605.0 480.0C602.0 480.6 590.4 480.5 587.5 480.0C584.6 479.5 577.6 476.4 576.2 475.0C574.9 473.6 574.1 468.6 573.8 466.2C573.4 463.9 573.4 453.6 572.5 451.9C571.6 450.2 566.8 449.7 565.0 449.4C563.2 449.1 553.6 448.5 555.0 448.8C556.4 449.0 578.2 452.4 579.4 452.2C580.6 452.1 569.4 448.1 566.9 447.3C564.5 446.5 557.0 444.6 554.5 444.2C552.0 443.7 544.6 442.9 542.1 442.9C539.6 442.9 531.9 443.8 529.6 443.8C527.4 443.7 521.9 443.1 519.7 442.3C517.4 441.5 509.4 437.6 507.2 436.1C505.1 434.6 499.4 429.1 498.5 427.4C497.7 425.6 498.2 421.4 498.5 418.7C498.9 415.9 502.1 403.1 502.3 400.0C502.4 396.9 500.4 391.1 500.3 387.5z" fill="#ff7a00" />
<path d="M461.2 418.7C463.4 416.8 476.9 421.1 479.9 423.6C482.9 426.1 482.6 433.5 483.6 437.3C484.6 441.1 487.8 449.9 487.3 452.2C486.8 454.6 482.5 455.1 479.9 454.7C477.2 454.4 469.6 452.1 467.4 449.8C465.3 447.4 464.5 441.5 463.7 437.3C462.9 433.2 459.1 420.5 461.2 418.7z" fill="#ff7a00" />
<path d="M517.5 384.4C517.7 382.0 516.4 378.8 515.9 376.6C515.5 374.4 512.7 364.7 512.8 362.5C513.0 360.3 515.8 355.8 517.5 354.7C519.2 353.6 526.6 352.8 530.0 351.6C533.4 350.3 548.1 343.7 551.9 342.2C555.6 340.7 565.0 338.5 567.5 336.7C570.0 334.9 574.8 325.5 576.9 324.4C578.9 323.2 584.4 325.1 587.8 325.2C591.2 325.2 607.3 325.1 611.2 325.0C615.2 324.9 623.8 324.2 626.9 323.8C630.0 323.3 639.7 321.0 642.5 320.3C645.3 319.6 653.8 316.6 655.0 316.4C656.2 316.2 653.5 319.5 654.4 318.8C655.2 318.0 662.6 310.8 663.8 309.4C664.9 308.0 664.8 305.5 666.1 305.0C667.3 304.5 673.7 304.5 676.2 304.4C678.8 304.2 688.0 303.8 691.9 303.8C695.8 303.7 704.5 303.5 715.3 303.4C726.1 303.4 781.8 303.4 800.0 303.4C818.2 303.4 887.0 302.9 897.0 303.8C907.0 304.7 898.3 311.1 900.0 312.0C901.7 313.0 912.5 312.0 914.4 313.6C916.3 315.2 918.0 325.3 919.0 328.0C920.0 330.7 923.2 337.9 924.3 340.2C925.5 342.4 929.8 348.7 930.4 350.8C931.0 352.9 930.6 359.3 930.4 361.4C930.2 363.6 928.5 369.8 928.1 372.1C927.7 374.3 926.7 381.1 926.6 384.2C926.5 387.3 927.1 400.3 927.5 403.1C927.9 406.0 930.0 411.1 930.6 412.5C931.2 413.9 934.9 415.0 933.8 417.2C932.6 419.3 920.9 430.9 919.0 434.0C917.1 437.1 915.1 445.6 914.5 448.3C913.9 451.0 914.8 459.8 912.7 460.9C910.6 462.0 897.5 459.7 893.9 459.5C890.2 459.3 879.5 458.6 875.9 458.8C872.3 458.9 861.5 460.4 858.0 460.5C854.4 460.7 841.3 458.7 840.0 460.0C838.7 461.3 844.9 472.3 845.0 473.5C845.1 474.6 841.3 472.6 840.7 471.7C840.1 470.8 839.8 466.5 838.9 464.5C838.0 462.5 833.9 454.1 831.7 451.9C829.6 449.8 820.8 443.7 817.4 443.0C813.9 442.2 801.6 444.3 797.6 444.7C793.7 445.2 780.5 446.4 777.9 447.4C775.2 448.5 772.5 454.0 770.7 455.5C768.9 457.0 763.5 462.0 759.9 462.7C756.3 463.4 739.1 463.0 734.8 462.7C730.5 462.4 718.8 460.2 716.8 460.0C714.8 459.9 716.2 462.1 715.0 461.2C713.8 460.4 706.4 453.5 705.0 451.9C703.6 450.2 702.0 446.3 701.2 445.0C700.5 443.7 698.4 439.6 697.5 438.8C696.6 437.9 693.5 437.0 692.5 436.9C691.5 436.8 688.5 437.1 687.5 437.5C686.5 437.9 683.5 440.1 682.5 441.2C681.5 442.4 679.0 447.6 677.5 448.8C676.0 449.9 669.8 452.2 667.5 452.8C665.2 453.3 657.5 454.0 655.0 454.4C652.5 454.7 645.0 455.9 642.5 456.2C640.0 456.6 632.5 457.2 630.0 457.8C627.5 458.2 619.4 460.4 617.5 461.2C615.6 462.1 612.5 465.2 611.2 466.2C610.0 467.2 606.5 470.7 605.0 471.2C603.5 471.8 597.6 472.2 596.2 471.9C594.9 471.5 592.1 468.8 591.2 467.5C590.4 466.2 588.3 460.5 587.5 458.8C586.7 457.0 583.9 451.5 583.1 450.0C582.3 448.5 581.0 445.1 579.4 444.2C577.8 443.2 569.4 440.6 566.9 440.0C564.5 439.5 557.0 438.8 554.5 438.6C552.0 438.3 544.6 438.0 542.1 437.9C539.6 437.9 531.9 438.4 529.6 437.9C527.4 437.5 521.5 434.6 519.7 433.6C517.8 432.5 512.0 429.1 511.0 427.4C510.0 425.6 509.5 418.9 509.7 416.2C510.0 413.4 512.7 403.2 513.5 400.0C514.2 396.8 517.3 386.7 517.5 384.4z" fill="#ffa61c" />
<path d="M528.4 376.6C528.5 372.6 525.2 364.4 525.3 362.5C525.5 360.6 528.3 358.8 530.0 357.8C531.7 356.9 539.8 354.4 542.5 353.1C545.2 351.9 553.8 346.6 556.6 345.3C559.4 344.0 568.3 341.6 570.6 339.8C573.0 338.0 575.9 328.6 580.0 327.3C584.1 326.1 606.6 327.5 611.2 327.5C615.9 327.5 623.8 327.6 626.9 327.5C630.0 327.4 639.7 326.8 642.5 326.6C645.3 326.3 653.2 324.4 655.0 325.0C656.8 325.6 659.6 332.7 660.6 332.8C661.7 333.0 664.7 328.6 665.3 326.6C665.9 324.5 665.8 314.2 666.9 312.5C668.0 310.8 673.8 310.0 676.2 309.7C678.8 309.4 688.0 309.4 691.9 309.4C695.8 309.3 704.5 309.4 715.3 309.4C726.1 309.4 782.5 309.3 800.0 309.3C817.5 309.3 880.3 309.6 890.0 309.3C899.7 309.0 896.0 305.3 897.0 306.0C898.0 306.7 898.6 315.4 900.0 316.6C901.4 317.8 909.2 317.0 910.6 318.1C912.1 319.3 913.9 325.8 914.4 328.0C915.0 330.2 915.5 337.9 916.0 340.2C916.4 342.4 918.6 348.7 919.0 350.8C919.4 352.9 919.8 359.3 919.8 361.4C919.8 363.6 919.1 369.8 919.0 372.1C918.9 374.3 918.6 381.1 918.5 384.2C918.5 387.3 917.9 400.3 918.1 403.1C918.4 406.0 920.5 411.1 921.2 412.5C922.0 413.9 925.7 415.0 925.2 417.2C924.6 419.3 916.8 430.9 915.4 434.0C914.0 437.1 911.5 446.0 910.9 448.3C910.3 450.7 910.8 456.6 909.1 457.3C907.4 458.0 897.2 455.9 893.9 455.5C890.5 455.2 879.5 453.6 875.9 453.7C872.3 453.8 861.5 456.4 858.0 456.4C854.4 456.4 842.1 454.4 840.0 453.7C837.9 453.1 838.3 451.4 837.1 450.1C835.9 448.9 830.1 442.5 828.1 441.2C826.1 439.8 819.5 436.8 817.4 436.7C815.2 436.5 809.5 439.0 806.6 439.4C803.7 439.7 791.9 439.7 788.6 440.3C785.4 440.8 776.4 443.4 774.3 444.7C772.1 446.1 768.5 452.1 767.1 453.7C765.6 455.3 763.1 460.2 759.9 460.9C756.7 461.6 739.1 461.2 734.8 460.9C730.5 460.6 718.8 458.6 716.8 458.2C714.8 457.9 716.1 458.4 715.0 457.5C713.9 456.6 707.4 450.4 706.2 448.8C705.1 447.1 704.5 442.6 703.8 441.2C703.0 439.9 699.9 435.8 698.8 435.0C697.6 434.2 693.8 433.2 692.5 433.1C691.2 433.0 687.5 433.2 686.2 433.8C685.0 434.3 681.1 437.5 680.0 438.8C678.9 440.0 676.2 445.1 675.0 446.2C673.8 447.4 669.5 449.4 667.5 450.0C665.5 450.6 657.5 451.6 655.0 451.9C652.5 452.2 645.0 452.9 642.5 453.1C640.0 453.3 632.5 453.6 630.0 453.8C627.5 453.9 619.8 454.5 617.5 455.0C615.2 455.5 609.0 457.8 607.5 458.8C606.0 459.8 603.4 464.2 602.5 465.0C601.6 465.8 599.5 466.4 598.8 466.2C598.0 466.1 595.8 464.8 595.0 463.8C594.2 462.8 592.1 457.9 591.2 456.2C590.4 454.6 587.4 449.1 586.2 447.5C585.1 445.9 581.3 441.4 579.4 440.4C577.4 439.4 569.4 437.7 566.9 437.3C564.5 436.9 557.0 436.4 554.5 436.3C552.0 436.2 544.1 436.2 542.1 436.1C540.1 435.9 536.3 435.4 534.6 434.8C532.9 434.2 526.2 431.1 524.7 429.9C523.1 428.6 519.6 424.1 519.1 422.4C518.6 420.6 519.1 414.4 519.7 412.4C520.2 410.4 523.8 406.1 524.7 402.5C525.5 398.9 528.4 380.6 528.4 376.6z" fill="#ff0040" stroke="#ffcc44" stroke-width="3.4" paint-order="stroke" stroke-linejoin="round"/>
<rect x="571.4" y="331" width="342.5" height="96.5" fill="#ff4030"/>
<rect x="665.3" y="305" width="235" height="24.5" fill="#ff0040"/>
<rect x="672" y="305" width="222" height="4" fill="#ffcc44"/>
<path d="M665.3 305.5C667.0 302.7 676.4 304.5 677.8 305.5C679.3 306.4 677.1 310.5 676.2 312.5C675.4 314.5 673.0 318.4 671.6 320.3C670.1 322.2 666.1 328.5 665.3 326.6C664.5 324.6 663.6 308.3 665.3 305.5z" fill="#ffcc44" />
<path d="M665.3 305.5C666.4 303.7 672.4 304.5 673.1 305.5C673.9 306.4 671.8 310.7 670.8 312.5C669.7 314.3 666.0 319.7 665.3 318.8C664.6 317.8 664.3 307.2 665.3 305.5z" fill="#ffa61c" />
<path d="M790.3 305.5C786.5 304.9 791.4 302.3 793.4 301.6C795.5 300.8 802.6 299.7 805.9 299.7C809.3 299.7 816.2 300.8 818.4 301.6C820.6 302.3 826.1 304.9 822.3 305.5C818.6 306.0 794.2 306.0 790.3 305.5z" fill="#ff0040" />
<path d="M824.7 303.1C826.7 300.9 842.2 302.8 845.0 303.1C847.8 303.4 852.1 304.7 852.5 306.2C852.9 307.8 849.2 316.6 849.4 318.8C849.5 320.9 851.1 327.0 854.1 328.1C857.0 329.2 874.2 330.0 879.1 330.0C883.9 330.0 899.4 329.2 902.5 328.1C905.6 327.0 909.7 320.6 910.3 318.8C910.9 316.9 908.4 310.6 908.8 309.4C909.1 308.1 913.0 303.8 913.4 306.2C913.9 308.8 913.6 331.6 913.4 334.4C913.3 337.2 912.0 330.8 911.9 334.4C911.7 338.0 914.4 367.5 911.9 370.3C909.4 373.1 892.5 364.1 886.9 362.5C881.2 360.9 860.3 356.4 855.6 354.7C850.9 353.0 841.1 345.8 840.0 345.3C838.9 344.8 845.3 350.5 845.0 350.0C844.7 349.5 838.6 342.7 837.2 340.6C835.8 338.6 832.2 331.2 830.9 329.7C829.7 328.1 825.3 327.7 824.7 325.0C824.1 322.3 822.7 305.3 824.7 303.1z" fill="#ffcc44" />
<path d="M852.5 312.5C853.6 310.6 853.6 308.6 858.8 307.8C863.9 307.1 879.8 307.1 886.9 307.5C893.9 307.9 902.2 308.5 905.6 310.2C909.0 311.8 910.0 316.3 909.5 318.8C909.1 321.2 907.1 325.1 902.5 326.6C897.9 328.0 885.9 328.3 879.1 328.4C872.3 328.6 861.3 328.6 857.2 327.3C853.1 326.1 852.4 322.5 851.7 320.3C851.0 318.1 851.4 314.4 852.5 312.5z" fill="#ff0040" />
<path d="M840.0 334.4C846.6 333.9 905.4 331.4 912.7 334.4C919.9 337.3 915.2 361.7 912.7 364.1C910.1 366.4 891.8 359.1 886.9 357.8C882.0 356.6 867.1 352.8 863.4 351.6C859.8 350.3 851.9 346.6 850.2 345.3C848.4 344.1 847.3 340.2 846.2 339.1C845.2 338.0 833.4 334.8 840.0 334.4z" fill="#ffa61c" />
<ellipse cx="892.3" cy="348.4" rx="14.5" ry="6" fill="#ff8c00"/>
<path d="M660.6 334.4C663.1 332.4 669.2 335.1 676.2 336.7C683.3 338.4 698.1 343.1 707.5 345.3C716.9 347.5 731.7 349.9 738.8 351.6C745.8 353.2 751.2 354.6 754.4 356.2C757.5 357.9 758.4 360.2 759.8 362.5C761.2 364.8 761.1 368.6 763.8 371.9C766.4 375.2 773.4 382.0 777.8 384.4C782.3 386.7 788.8 387.7 793.4 387.5C798.1 387.3 804.8 384.2 809.1 382.8C813.3 381.4 818.3 378.4 821.6 378.1C824.8 377.9 828.6 379.4 830.9 381.2C833.3 383.1 835.7 387.3 837.2 390.6C838.7 393.9 841.1 399.4 841.1 403.1C841.1 406.9 839.2 412.3 837.2 415.6C835.2 418.9 830.9 423.8 827.8 425.0C824.8 426.2 820.2 424.8 816.9 423.4C813.6 422.0 809.2 418.2 805.9 415.6C802.7 413.0 798.5 408.8 795.0 406.2C791.5 403.7 786.2 399.8 782.5 398.4C778.8 397.0 774.2 397.6 770.0 396.9C765.8 396.2 758.6 395.2 754.4 393.8C750.2 392.3 745.2 389.4 741.9 387.5C738.6 385.6 735.8 383.8 732.5 381.2C729.2 378.7 723.8 372.5 720.0 370.3C716.2 368.1 714.1 367.1 707.5 366.4C700.9 365.7 682.6 366.4 676.2 365.6C669.9 364.8 667.8 363.3 665.3 360.9C662.9 358.6 660.5 354.0 659.8 350.0C659.1 346.0 658.2 336.4 660.6 334.4z" fill="#ffcc44" />
<path d="M663.8 340.6C665.7 338.9 670.9 337.6 676.2 338.3C681.6 339.0 693.4 343.1 699.7 345.3C706.0 347.5 715.4 351.2 718.4 353.1C721.5 355.0 721.6 356.5 720.0 357.8C718.4 359.1 712.9 360.9 707.5 361.7C702.1 362.5 689.9 363.8 684.1 363.3C678.2 362.8 671.6 360.6 668.4 358.6C665.3 356.6 663.7 352.7 663.0 350.0C662.3 347.3 661.8 342.4 663.8 340.6z" fill="#ffa61c" />
<ellipse cx="678.1" cy="350.8" rx="8.5" ry="5.2" fill="#ff8400"/>
<path d="M807.5 390.6C808.9 387.8 813.8 386.4 816.9 385.9C819.9 385.5 825.5 385.9 827.8 387.5C830.2 389.1 832.0 393.6 832.5 396.9C833.0 400.2 832.3 406.3 830.9 409.4C829.5 412.4 825.7 416.5 823.1 417.2C820.5 417.9 816.1 415.9 813.8 414.1C811.4 412.2 808.4 408.2 807.5 404.7C806.6 401.2 806.1 393.4 807.5 390.6z" fill="#ffa61c" />
<path d="M555.8 395.3C555.8 392.0 559.6 388.9 564.4 387.5C569.2 386.1 582.0 386.9 587.8 385.9C593.7 385.0 599.9 381.7 603.4 381.2C607.0 380.8 609.1 381.4 611.2 382.8C613.4 384.2 616.4 387.8 617.5 390.6C618.6 393.4 619.2 398.6 618.3 401.6C617.3 404.5 614.6 408.2 611.2 410.2C607.9 412.1 600.3 414.0 595.6 414.8C590.9 415.7 584.7 416.4 580.0 415.6C575.3 414.8 568.0 412.4 564.4 409.4C560.7 406.3 555.8 398.6 555.8 395.3z" fill="#ffcc44" />
<path d="M565.9 395.3C567.8 393.9 575.1 393.3 580.0 393.8C584.9 394.2 596.4 396.6 598.8 398.4C601.1 400.3 598.4 404.7 595.6 406.2C592.8 407.8 584.2 409.1 580.0 408.6C575.8 408.1 569.6 405.1 567.5 403.1C565.4 401.1 564.1 396.7 565.9 395.3z" fill="#ffa61c" />
<path d="M682.5 435.0C682.3 434.3 687.7 432.8 690.3 432.8C692.9 432.8 699.5 434.3 699.7 435.0C699.9 435.7 694.5 437.5 691.9 437.5C689.3 437.5 682.7 435.7 682.5 435.0z" fill="#ffcc44" />
<path d="M951.7 346.2C953.0 345.6 965.3 351.8 965.3 353.1C965.4 354.4 953.8 359.8 952.4 359.1C951.1 358.5 950.4 346.8 951.7 346.2z" fill="#ff7a00" />
</g>
<g clip-path="url(#pc)">
<path d="M458.0 228.0L523.8 228.5L501.9 325.0L479.2 423.4L458.0 415.6z" fill="#fff" />
<path d="M564.4 228.5L613.6 228.5L601.9 293.0L558.1 287.5L563.6 289.0L557.3 325.0L547.2 318.8z" fill="#fff" />
<path d="M540.2 364.8L550.3 365.6L537.8 426.6L526.1 426.6z" fill="#fff" />
<path d="M513.3 469.9L522.3 469.0L499.0 552.8L490.5 552.8z" fill="#fff" />
<path d="M559.1 487.8L578.9 482.5L638.1 482.5L638.1 487.8L658.5 487.8L658.5 552.8L552.8 552.8z" fill="#fff" />
<path d="M680.0 488.7L805.7 490.5L803.9 552.8L678.2 552.8z" fill="#fff" />
<path d="M807.5 483.3L957.6 483.3L964.8 489.6L968.4 552.8L805.3 552.8z" fill="#fff" />
<path d="M1030.0 353.8L1037.0 352.5L1037.0 553.0L1013.2 552.8L1012.4 496.8L1021.3 434.9L1011.9 418.8z" fill="#fff" />
<path d="M1010.5 417.5L1036.5 426.0L1036.5 437.2L1021.0 436.3L1015.0 428.0z" fill="#09681a" />
<path d="M686.0 228.0L980.5 228.0L986.1 234.4L980.6 240.6L972.8 248.4L968.1 259.4L966.2 267.2L966.2 280.5L897.8 280.5L897.8 296.0L724.7 295.3L724.7 293.0L686.0 293.0z" fill="#000" />
<path d="M1010.3 228.4C1010.1 230.1 1010.8 238.5 1009.1 240.6C1007.3 242.8 1000.1 243.5 997.0 244.5C994.0 245.5 988.6 246.5 986.1 248.1C983.6 249.8 979.9 254.5 978.3 257.0C976.6 259.5 975.2 265.2 973.6 266.9C972.0 268.5 967.2 269.0 966.2 269.4L966.2 267.2L968.1 259.4L972.8 248.4L980.6 240.6L986.1 234.4L979.8 228.4z" fill="#20d020" />
<path d="M1005.2 228.4C1005.1 229.8 1005.5 236.7 1004.2 238.6C1002.9 240.5 997.7 241.7 995.2 242.8C992.7 243.9 987.6 245.2 985.2 246.9C982.8 248.6 979.0 253.1 977.4 255.6C975.7 258.1 974.2 263.8 972.7 265.6C971.2 267.4 967.1 268.6 966.2 269.0L966.2 267.2L968.1 259.4L972.8 248.4L980.6 240.6L986.1 234.4L979.8 228.4z" fill="#00e0a0" />
<path d="M1000.2 228.4C1000.0 229.5 1000.2 234.9 999.3 236.6C998.4 238.3 995.4 239.9 993.4 241.1C991.4 242.4 986.5 243.9 984.3 245.6C982.0 247.4 978.1 251.7 976.5 254.2C974.8 256.7 973.1 262.4 971.8 264.4C970.4 266.3 967.0 268.1 966.2 268.6L966.2 267.2L968.1 259.4L972.8 248.4L980.6 240.6L986.1 234.4L979.8 228.4z" fill="#00c8ff" />
<path d="M995.1 228.4C995.0 229.2 994.9 233.1 994.5 234.5C994.0 236.0 993.0 238.1 991.6 239.5C990.1 240.8 985.5 242.6 983.4 244.4C981.2 246.1 977.2 250.2 975.5 252.7C973.9 255.2 972.1 261.1 970.9 263.1C969.6 265.2 966.9 267.6 966.2 268.3L966.2 267.2L968.1 259.4L972.8 248.4L980.6 240.6L986.1 234.4L979.8 228.4z" fill="#2040ff" />
<path d="M990.0 228.4C989.9 229.0 989.6 231.3 989.6 232.5C989.5 233.7 990.7 236.3 989.7 237.8C988.8 239.2 984.5 241.3 982.4 243.1C980.4 244.9 976.3 248.8 974.6 251.3C973.0 253.8 971.1 259.7 969.9 261.9C968.8 264.1 966.7 267.1 966.2 267.9L966.2 267.2L968.1 259.4L972.8 248.4L980.6 240.6L986.1 234.4L979.8 228.4z" fill="#6a00ff" />
<path d="M984.9 228.4C984.9 228.7 984.3 229.5 984.7 230.5C985.1 231.5 988.3 234.5 987.9 236.1C987.5 237.6 983.4 240.0 981.5 241.9C979.6 243.7 975.4 247.4 973.7 249.9C972.1 252.4 970.0 258.3 969.0 260.6C968.0 263.0 966.6 266.6 966.2 267.6L966.2 267.2L968.1 259.4L972.8 248.4L980.6 240.6L986.1 234.4L979.8 228.4z" fill="#400060" />
<path d="M686.0 228.0L980.5 228.0L986.1 234.4L980.6 240.6L972.8 248.4L968.1 259.4L966.2 267.2L966.2 280.5L897.8 280.5L897.8 296.0L724.7 295.3L724.7 293.0L686.0 293.0z" fill="#000" />
<defs><linearGradient id="rg1" x1="0" x2="1" y1="0" y2="0"><stop offset="0" stop-color="#0b640b"/><stop offset=".35" stop-color="#20e020"/><stop offset=".6" stop-color="#00d0ff"/><stop offset=".85" stop-color="#2030ff"/><stop offset="1" stop-color="#6000c0"/></linearGradient></defs>
<path d="M679.5 229.0C680.1 227.4 685.5 225.7 686.2 229.0C686.9 232.3 686.5 258.7 686.2 262.0C685.9 265.3 684.0 262.5 683.5 262.0C683.0 261.5 681.3 258.7 681.0 257.0C680.7 255.3 680.6 247.8 680.5 245.0C680.4 242.2 678.9 230.6 679.5 229.0z" fill="url(#rg1)" />
</g>
<g clip-path="url(#pc)">
<path d="M523.8 228.5L501.9 325.0L479.2 423.4L458.4 415.6" fill="none" stroke="#000" stroke-width="1" />
<path d="M458.4 304.7L504.9 313.4L504.7 315.6L458.4 307.0z" fill="#1400f0" />
<path d="M478.0 309.5L504.9 314.3L504.7 315.6L478.0 311.0z" fill="#00a8ff" />
<path d="M458.4 256.2L515.2 266.4" fill="none" stroke="#000" stroke-width="1" />
<path d="M458.4 307.0L504.7 315.6" fill="none" stroke="#000" stroke-width="1" />
<path d="M458.4 358.6L492.5 366.0" fill="none" stroke="#000" stroke-width="1" />
<path d="M531.6 232.8L512.8 325.0L494.5 425.0L458.6 550.7" fill="none" stroke="#000" stroke-width="1" />
<path d="M529.6 239.1h4" fill="none" stroke="#000" stroke-width="1.4" />
<path d="M510.0 339.8h4" fill="none" stroke="#000" stroke-width="1.4" />
<path d="M488.0 441.2h4" fill="none" stroke="#000" stroke-width="1.4" />
<path d="M460.2 539.9h4" fill="none" stroke="#000" stroke-width="1.4" />
<path d="M564.4 228.5L546.0 325.0L525.0 425.0L513.3 470.0L490.0 552.8" fill="none" stroke="#000" stroke-width="1" />
<path d="M563.6 289.0L557.3 325.0L539.4 425.0L522.3 470.0L499.0 552.8" fill="none" stroke="#000" stroke-width="1" />
<path d="M571.4 228.5L558.1 287.5L601.9 293.0L613.6 228.5" fill="none" stroke="#000" stroke-width="1" />
<path d="M547.2 318.8L557.3 325.0" fill="none" stroke="#000" stroke-width="1" />
<path d="M540.2 364.8L550.3 365.6" fill="none" stroke="#000" stroke-width="1" />
<path d="M537.8 426.6L526.1 426.6" fill="none" stroke="#000" stroke-width="1" />
<path d="M513.3 469.9L522.3 469.0" fill="none" stroke="#000" stroke-width="1" />
<path d="M557.3 323.8L609.7 325.0" fill="none" stroke="#000" stroke-width="1.2" />
<circle cx="609.7" cy="325" r="1.5"/>
<path d="M557.3 325.0L571.4 331.0" fill="none" stroke="#000" stroke-width="1" />
<path d="M571.4 331V427.5" fill="none" stroke="#000" stroke-width="1.2" />
<path d="M563.6 330.4H917.3" fill="none" stroke="#000" stroke-width="1.6" />
<path d="M541 427.8H917.3" fill="none" stroke="#000" stroke-width="1.6" />
<path d="M913.6 330.3V427.5M917.4 330.3V427.5" fill="none" stroke="#000" stroke-width="1" />
<path d="M665.3 329V304.7H900V329" fill="none" stroke="#000" stroke-width="1.1" />
<path d="M679.7 305.5V328" fill="none" stroke="#000" stroke-width="2.2" />
<path d="M693.1 305.5V328" fill="none" stroke="#000" stroke-width="2.2" />
<path d="M706.5 305.5V328" fill="none" stroke="#000" stroke-width="2.2" />
<path d="M720.0 305.5V328" fill="none" stroke="#000" stroke-width="2.2" />
<path d="M733.4 305.5V328" fill="none" stroke="#000" stroke-width="2.2" />
<path d="M746.8 305.5V328" fill="none" stroke="#000" stroke-width="2.2" />
<path d="M760.2 305.5V328" fill="none" stroke="#000" stroke-width="2.2" />
<path d="M773.6 305.5V328" fill="none" stroke="#000" stroke-width="2.2" />
<path d="M787.1 305.5V328" fill="none" stroke="#000" stroke-width="2.2" />
<path d="M800.5 305.5V328" fill="none" stroke="#000" stroke-width="2.2" />
<path d="M813.9 305.5V328" fill="none" stroke="#000" stroke-width="2.2" />
<path d="M827.3 305.5V328" fill="none" stroke="#000" stroke-width="2.2" />
<path d="M840.7 305.5V328" fill="none" stroke="#000" stroke-width="2.2" />
<path d="M854.2 305.5V328" fill="none" stroke="#000" stroke-width="2.2" />
<path d="M867.6 305.5V328" fill="none" stroke="#000" stroke-width="2.2" />
<path d="M881.0 305.5V328" fill="none" stroke="#000" stroke-width="2.2" />
<path d="M541.7 365H571" fill="none" stroke="#000" stroke-width="1.2" />
<path d="M563.6 365.6V427.5M563.6 367.2H877Q888.4 367.2 888.4 379V416.5Q888.4 428 877 428" fill="none" stroke="#000" stroke-width="1.1" />
<path d="M874.7 367.2V428" fill="none" stroke="#000" stroke-width="1" />
<path d="M578.4 371V394M578.4 401V423.4" fill="none" stroke="#000" stroke-width="2.4" />
<path d="M592.5 371V394M592.5 401V423.4" fill="none" stroke="#000" stroke-width="2.4" />
<path d="M606.5 371V394M606.5 401V423.4" fill="none" stroke="#000" stroke-width="2.4" />
<path d="M620.6 371V394M620.6 401V423.4" fill="none" stroke="#000" stroke-width="2.4" />
<path d="M634.7 371V394M634.7 401V423.4" fill="none" stroke="#000" stroke-width="2.4" />
<path d="M648.8 371V394M648.8 401V423.4" fill="none" stroke="#000" stroke-width="2.4" />
<path d="M662.8 371V394M662.8 401V423.4" fill="none" stroke="#000" stroke-width="2.4" />
<path d="M676.9 371V394M676.9 401V423.4" fill="none" stroke="#000" stroke-width="2.4" />
<path d="M691.0 371V394M691.0 401V423.4" fill="none" stroke="#000" stroke-width="2.4" />
<path d="M705.0 371V394M705.0 401V423.4" fill="none" stroke="#000" stroke-width="2.4" />
<path d="M719.1 371V394M719.1 401V423.4" fill="none" stroke="#000" stroke-width="2.4" />
<path d="M733.2 371V394M733.2 401V423.4" fill="none" stroke="#000" stroke-width="2.4" />
<path d="M747.2 371V394M747.2 401V423.4" fill="none" stroke="#000" stroke-width="2.4" />
<path d="M761.3 371V394M761.3 401V423.4" fill="none" stroke="#000" stroke-width="2.4" />
<path d="M775.4 371V394M775.4 401V423.4" fill="none" stroke="#000" stroke-width="2.4" />
<path d="M789.5 371V394M789.5 401V423.4" fill="none" stroke="#000" stroke-width="2.4" />
<path d="M803.5 371V394M803.5 401V423.4" fill="none" stroke="#000" stroke-width="2.4" />
<path d="M817.6 371V394M817.6 401V423.4" fill="none" stroke="#000" stroke-width="2.4" />
<path d="M831.7 371V394M831.7 401V423.4" fill="none" stroke="#000" stroke-width="2.4" />
<path d="M845.7 371V394M845.7 401V423.4" fill="none" stroke="#000" stroke-width="2.4" />
<path d="M859.8 371V394M859.8 401V423.4" fill="none" stroke="#000" stroke-width="2.4" />
<path d="M563.6 394.5H874.7M563.6 400.8H874.7" fill="none" stroke="#000" stroke-width="1" />
<path d="M563.6 392V403" fill="none" stroke="#000" stroke-width="2.5" />
<circle cx="667.7" cy="397.7" r="1.8"/>
<circle cx="770.8" cy="398.4" r="1.8"/>
<circle cx="874.7" cy="398.4" r="1.8"/>
<path d="M562.7 458.2H648M562.7 469H640" fill="none" stroke="#000" stroke-width="1" />
<path d="M514 470L562.7 458.2" fill="none" stroke="#000" stroke-width="1" />
<path d="M522 469.5H562" fill="none" stroke="#000" stroke-width="1" />
<path d="M659 458.8L845 461.5" fill="none" stroke="#000" stroke-width="1" />
<path d="M683.6 460V470L752.7 471.3" fill="none" stroke="#000" stroke-width="1" />
<path d="M805.7 461.5H917.2" fill="none" stroke="#000" stroke-width="1" />
<circle cx="620.2" cy="462.7" r="1.6"/>
<circle cx="747.9" cy="463.6" r="1.6"/>
<circle cx="876.8" cy="466" r="1.6"/>
<path d="M552.8 552.8L559.1 487.8L578.9 482.5L638.1 482.5L638.1 487.8L658.5 487.8L658.5 552.8" fill="none" stroke="#000" stroke-width="1" />
<path d="M678.2 552.8L680.0 488.7L805.7 490.5L803.9 552.8" fill="none" stroke="#000" stroke-width="1" />
<path d="M805.3 552.8L807.5 483.3L957.6 483.3L964.8 489.6L968.4 552.8" fill="none" stroke="#000" stroke-width="1" />
<path d="M1037.0 352.5L1030.0 353.8L1011.9 418.8" fill="none" stroke="#000" stroke-width="1" />
<path d="M1021.0 436.3L1012.4 496.8L1013.2 552.8" fill="none" stroke="#000" stroke-width="1" />
<path d="M1012.4 498.6H1037" fill="none" stroke="#000" stroke-width="1" />
<path d="M1011.0 418.3L1036.5 426.2" fill="none" stroke="#000" stroke-width="1" />
<path d="M1021.0 436.3L1036.5 437.2" fill="none" stroke="#000" stroke-width="1" />
<path d="M613.6 231.2C616.3 231.8 624.7 233.1 630.0 234.4C635.3 235.7 641.6 237.4 645.6 239.1C649.7 240.8 651.1 241.9 654.4 244.5C657.7 247.1 660.1 250.9 665.3 254.7C670.6 258.5 682.5 265.1 685.9 267.2" fill="none" stroke="#000" stroke-width="1.1" />
<path d="M608.9 265.6C609.6 266.7 611.1 269.5 612.8 271.9C614.5 274.2 616.7 278.9 619.1 279.7C621.4 280.5 624.3 277.9 626.9 276.6C629.5 275.3 630.0 273.4 634.7 271.9C639.4 270.3 650.7 268.0 655.0 267.2C659.3 266.4 655.5 265.1 660.6 267.2C665.8 269.3 681.7 277.6 685.9 279.7" fill="none" stroke="#000" stroke-width="1.1" />
<path d="M966.2 273.4C968.6 272.9 976.7 272.7 980.6 270.3C984.6 268.0 986.1 261.7 990.0 259.4C993.9 257.0 999.1 257.8 1004.1 256.2C1009.0 254.7 1014.3 251.8 1019.7 250.0C1025.0 248.2 1033.4 246.1 1036.1 245.3" fill="none" stroke="#000" stroke-width="1.1" />
<path d="M946.2 280.5C949.4 280.9 956.7 282.7 965.0 282.8C973.3 282.9 984.4 281.0 996.2 281.2C1008.1 281.5 1029.5 283.9 1036.1 284.4" fill="none" stroke="#000" stroke-width="1.1" />
<path d="M1009.4 361.4C1010.4 360.9 1013.5 358.4 1015.5 358.4C1017.5 358.4 1020.8 359.1 1021.6 361.4C1022.3 363.7 1021.3 368.8 1020.1 372.1C1018.8 375.4 1015.5 381.2 1014.0 381.2C1012.5 381.2 1011.7 375.4 1010.9 372.1C1010.2 368.8 1009.7 363.2 1009.4 361.4" fill="none" stroke="#000" stroke-width="1.1" />
<path d="M977.5 382.8C979.6 381.5 986.9 376.8 990.0 375.0C993.1 373.2 994.2 374.0 996.2 371.9C998.3 369.8 999.9 365.9 1002.5 362.5C1005.1 359.1 1007.7 354.9 1011.9 351.6C1016.0 348.2 1024.9 343.8 1027.5 342.2" fill="none" stroke="#000" stroke-width="1.1" />
<path d="M971.2 398.4C972.8 397.9 976.5 396.6 980.6 395.3C984.8 394.0 991.6 393.8 996.2 390.6C1000.9 387.5 1006.1 381.0 1008.8 376.6C1011.4 372.1 1011.4 366.1 1011.9 364.1" fill="none" stroke="#000" stroke-width="1.1" />
<path d="M974.4 412.5C978.0 412.0 990.3 409.5 996.2 409.4C1002.2 409.2 1008.0 411.3 1010.3 411.7" fill="none" stroke="#000" stroke-width="1.1" />
<path d="M954.9 444.7C957.3 445.3 964.5 448.3 969.3 448.3C974.1 448.3 978.2 446.8 983.6 444.7C989.0 442.7 995.6 437.6 1001.6 435.8C1007.6 434.0 1016.5 434.3 1019.5 434.0" fill="none" stroke="#000" stroke-width="1.1" />
<path d="M947.7 453.7C950.7 454.9 959.7 460.6 965.7 460.9C971.7 461.2 979.1 458.2 983.6 455.5C988.1 452.8 986.6 447.1 992.6 444.7C998.6 442.4 1015.0 441.8 1019.5 441.2" fill="none" stroke="#000" stroke-width="1.1" />
<path d="M951.3 464.5C954.3 465.4 962.4 470.5 969.3 469.9C976.1 469.3 984.2 463.9 992.6 460.9C1001.0 457.9 1015.0 453.4 1019.5 451.9" fill="none" stroke="#000" stroke-width="1.1" />
<path d="M969.3 518.4C970.5 516.3 973.2 508.5 976.4 505.8C979.7 503.1 984.2 502.5 989.0 502.2C993.8 501.9 1001.3 501.3 1005.2 504.0C1009.1 506.7 1011.2 516.0 1012.4 518.4" fill="none" stroke="#000" stroke-width="1.1" />
<path d="M976.4 552.8C977.3 547.1 979.1 525.6 981.8 518.4C984.5 511.1 988.7 509.4 992.6 509.4C996.5 509.4 1002.5 511.1 1005.2 518.4C1007.9 525.6 1008.2 547.1 1008.8 552.8" fill="none" stroke="#000" stroke-width="1.1" />
<path d="M605.0 283.6C607.1 284.1 613.1 286.5 617.5 286.7C621.9 287.0 627.4 286.1 631.6 285.2C635.7 284.2 638.6 282.4 642.5 281.2C646.4 280.1 653.0 278.6 655.0 278.1C657.0 277.6 653.4 277.3 654.4 278.1C655.3 278.9 658.8 281.2 660.6 282.8C662.4 284.4 662.7 286.5 665.3 287.5C667.9 288.5 672.8 288.5 676.2 289.1C679.7 289.6 684.3 290.4 685.9 290.6" fill="none" stroke="#000" stroke-width="1.1" />
<path d="M562.8 289.4C564.6 289.6 571.7 288.3 573.8 290.6C575.8 292.9 573.0 299.7 575.3 303.1C577.7 306.5 583.4 310.4 587.8 310.9C592.2 311.5 598.0 308.1 601.9 306.2C605.8 304.4 607.1 301.6 611.2 300.0C615.4 298.4 619.6 297.9 626.9 296.9C634.2 295.8 644.2 294.1 655.0 293.8C665.8 293.4 682.1 294.4 691.9 294.5C701.7 294.7 710.1 294.5 713.8 294.5" fill="none" stroke="#000" stroke-width="1.1" />
<path d="M897.8 293.8C899.1 293.3 904.5 292.4 907.2 290.6C909.9 288.9 913.5 281.8 918.1 280.5C922.7 279.1 937.4 279.9 941.6 280.5C945.7 281.0 946.2 283.0 949.4 284.4C952.5 285.7 958.8 289.4 965.0 290.6C971.2 291.9 989.0 292.7 996.2 293.8C1003.5 294.8 1015.1 296.8 1019.7 298.4C1024.3 300.1 1029.0 304.5 1030.6 306.2C1032.3 308.0 1031.8 308.8 1032.2 311.3C1032.6 313.8 1033.9 321.7 1033.7 325.0C1033.5 328.2 1032.3 333.4 1030.7 335.6C1029.1 337.8 1024.0 340.1 1021.6 341.7C1019.1 343.3 1014.5 345.7 1012.5 347.8C1010.4 349.8 1007.6 354.0 1006.4 356.9C1005.2 359.7 1005.4 366.0 1003.3 369.0C1001.3 372.1 994.8 377.6 991.2 379.7C987.5 381.7 980.0 383.1 976.0 384.2C971.9 385.3 964.0 387.2 960.8 388.0C957.5 388.8 952.9 390.0 951.7 390.3" fill="none" stroke="#000" stroke-width="1.1" />
<path d="M900.0 298.4C902.0 298.2 911.1 297.2 915.2 296.8C919.3 296.4 927.2 295.2 930.4 295.3C933.6 295.4 937.1 296.5 939.5 297.6C941.9 298.7 945.8 302.1 948.6 303.7C951.5 305.3 957.1 308.7 960.8 309.8C964.4 310.8 971.9 310.7 976.0 311.3C980.0 311.9 987.5 312.9 991.2 314.3C994.8 315.7 1001.3 319.5 1003.3 321.9C1005.4 324.3 1006.4 329.5 1006.4 332.6C1006.4 335.6 1004.4 341.7 1003.3 344.7C1002.3 347.8 1000.4 352.3 998.8 355.3C997.2 358.4 994.2 365.1 991.2 367.5C988.1 369.9 980.0 372.4 976.0 373.6C971.9 374.8 964.2 376.0 960.8 376.6C957.3 377.2 951.6 377.9 950.2 378.1" fill="none" stroke="#000" stroke-width="1.1" />
<path d="M523.8 237.5C524.5 236.5 526.9 232.4 528.4 231.2C530.0 230.1 531.3 230.3 533.1 230.5C534.9 230.6 537.4 229.6 539.4 232.0C541.3 234.5 543.5 240.0 544.8 245.3C546.1 250.7 546.5 259.9 547.2 264.1C547.8 268.2 547.4 268.0 548.8 270.3C550.1 272.7 554.0 276.8 555.0 278.1" fill="none" stroke="#000" stroke-width="0.7" />
<circle cx="579.5" cy="291" r="5.3" fill="none" stroke="#000" stroke-width="1.6"/>
<circle cx="1020.3" cy="386" r="5.3" fill="none" stroke="#000" stroke-width="1.6"/>
<circle cx="1015.6" cy="366.5" r="1.5"/>
<g transform="translate(752.8 310.6)"><circle r="11.7" fill="rgba(45,20,0,0.5)" stroke="#000" stroke-width="1.4"/><path d="M2.5 0.0L11.7 0.0M2.4 0.8L11.1 3.6M2.0 1.5L9.5 6.9M1.5 2.0L6.9 9.5M0.8 2.4L3.6 11.1M0.0 2.5L0.0 11.7M-0.8 2.4L-3.6 11.1M-1.5 2.0L-6.9 9.5M-2.0 1.5L-9.5 6.9M-2.4 0.8L-11.1 3.6M-2.5 0.0L-11.7 0.0M-2.4 -0.8L-11.1 -3.6M-2.0 -1.5L-9.5 -6.9M-1.5 -2.0L-6.9 -9.5M-0.8 -2.4L-3.6 -11.1M-0.0 -2.5L-0.0 -11.7M0.8 -2.4L3.6 -11.1M1.5 -2.0L6.9 -9.5M2.0 -1.5L9.5 -6.9M2.4 -0.8L11.1 -3.6" stroke="#000" stroke-width=".9" fill="none"/><circle r="9.1" fill="none" stroke="#000" stroke-width="1" stroke-dasharray="2.2 1.2"/><circle r="6.4" fill="none" stroke="#000" stroke-width=".9" stroke-dasharray="1.6 1"/><circle r="3.9" fill="none" stroke="#000" stroke-width=".9"/><circle r="2.8" fill="#000"/></g>
<g transform="translate(842.7 311.7)"><circle r="11.7" fill="rgba(45,20,0,0.5)" stroke="#000" stroke-width="1.4"/><path d="M2.5 0.0L11.7 0.0M2.4 0.8L11.1 3.6M2.0 1.5L9.5 6.9M1.5 2.0L6.9 9.5M0.8 2.4L3.6 11.1M0.0 2.5L0.0 11.7M-0.8 2.4L-3.6 11.1M-1.5 2.0L-6.9 9.5M-2.0 1.5L-9.5 6.9M-2.4 0.8L-11.1 3.6M-2.5 0.0L-11.7 0.0M-2.4 -0.8L-11.1 -3.6M-2.0 -1.5L-9.5 -6.9M-1.5 -2.0L-6.9 -9.5M-0.8 -2.4L-3.6 -11.1M-0.0 -2.5L-0.0 -11.7M0.8 -2.4L3.6 -11.1M1.5 -2.0L6.9 -9.5M2.0 -1.5L9.5 -6.9M2.4 -0.8L11.1 -3.6" stroke="#000" stroke-width=".9" fill="none"/><circle r="9.1" fill="none" stroke="#000" stroke-width="1" stroke-dasharray="2.2 1.2"/><circle r="6.4" fill="none" stroke="#000" stroke-width=".9" stroke-dasharray="1.6 1"/><circle r="3.9" fill="none" stroke="#000" stroke-width=".9"/><circle r="2.8" fill="#000"/></g>
<g transform="translate(923.3 324.0)"><circle r="11.7" fill="rgba(45,20,0,0.5)" stroke="#000" stroke-width="1.4"/><path d="M2.5 0.0L11.7 0.0M2.4 0.8L11.1 3.6M2.0 1.5L9.5 6.9M1.5 2.0L6.9 9.5M0.8 2.4L3.6 11.1M0.0 2.5L0.0 11.7M-0.8 2.4L-3.6 11.1M-1.5 2.0L-6.9 9.5M-2.0 1.5L-9.5 6.9M-2.4 0.8L-11.1 3.6M-2.5 0.0L-11.7 0.0M-2.4 -0.8L-11.1 -3.6M-2.0 -1.5L-9.5 -6.9M-1.5 -2.0L-6.9 -9.5M-0.8 -2.4L-3.6 -11.1M-0.0 -2.5L-0.0 -11.7M0.8 -2.4L3.6 -11.1M1.5 -2.0L6.9 -9.5M2.0 -1.5L9.5 -6.9M2.4 -0.8L11.1 -3.6" stroke="#000" stroke-width=".9" fill="none"/><circle r="9.1" fill="none" stroke="#000" stroke-width="1" stroke-dasharray="2.2 1.2"/><circle r="6.4" fill="none" stroke="#000" stroke-width=".9" stroke-dasharray="1.6 1"/><circle r="3.9" fill="none" stroke="#000" stroke-width=".9"/><circle r="2.8" fill="#000"/></g>
<g transform="translate(925.5 426.0)"><circle r="11.7" fill="rgba(45,20,0,0.5)" stroke="#000" stroke-width="1.4"/><path d="M2.5 0.0L11.7 0.0M2.4 0.8L11.1 3.6M2.0 1.5L9.5 6.9M1.5 2.0L6.9 9.5M0.8 2.4L3.6 11.1M0.0 2.5L0.0 11.7M-0.8 2.4L-3.6 11.1M-1.5 2.0L-6.9 9.5M-2.0 1.5L-9.5 6.9M-2.4 0.8L-11.1 3.6M-2.5 0.0L-11.7 0.0M-2.4 -0.8L-11.1 -3.6M-2.0 -1.5L-9.5 -6.9M-1.5 -2.0L-6.9 -9.5M-0.8 -2.4L-3.6 -11.1M-0.0 -2.5L-0.0 -11.7M0.8 -2.4L3.6 -11.1M1.5 -2.0L6.9 -9.5M2.0 -1.5L9.5 -6.9M2.4 -0.8L11.1 -3.6" stroke="#000" stroke-width=".9" fill="none"/><circle r="9.1" fill="none" stroke="#000" stroke-width="1" stroke-dasharray="2.2 1.2"/><circle r="6.4" fill="none" stroke="#000" stroke-width=".9" stroke-dasharray="1.6 1"/><circle r="3.9" fill="none" stroke="#000" stroke-width=".9"/><circle r="2.8" fill="#000"/></g>
<g transform="translate(924.4 452.8)"><circle r="11.7" fill="rgba(45,20,0,0.5)" stroke="#000" stroke-width="1.4"/><path d="M2.5 0.0L11.7 0.0M2.4 0.8L11.1 3.6M2.0 1.5L9.5 6.9M1.5 2.0L6.9 9.5M0.8 2.4L3.6 11.1M0.0 2.5L0.0 11.7M-0.8 2.4L-3.6 11.1M-1.5 2.0L-6.9 9.5M-2.0 1.5L-9.5 6.9M-2.4 0.8L-11.1 3.6M-2.5 0.0L-11.7 0.0M-2.4 -0.8L-11.1 -3.6M-2.0 -1.5L-9.5 -6.9M-1.5 -2.0L-6.9 -9.5M-0.8 -2.4L-3.6 -11.1M-0.0 -2.5L-0.0 -11.7M0.8 -2.4L3.6 -11.1M1.5 -2.0L6.9 -9.5M2.0 -1.5L9.5 -6.9M2.4 -0.8L11.1 -3.6" stroke="#000" stroke-width=".9" fill="none"/><circle r="9.1" fill="none" stroke="#000" stroke-width="1" stroke-dasharray="2.2 1.2"/><circle r="6.4" fill="none" stroke="#000" stroke-width=".9" stroke-dasharray="1.6 1"/><circle r="3.9" fill="none" stroke="#000" stroke-width=".9"/><circle r="2.8" fill="#000"/></g>
<g transform="translate(573.5 463.2)"><circle r="11.7" fill="rgba(45,20,0,0.5)" stroke="#000" stroke-width="1.4"/><path d="M2.5 0.0L11.7 0.0M2.4 0.8L11.1 3.6M2.0 1.5L9.5 6.9M1.5 2.0L6.9 9.5M0.8 2.4L3.6 11.1M0.0 2.5L0.0 11.7M-0.8 2.4L-3.6 11.1M-1.5 2.0L-6.9 9.5M-2.0 1.5L-9.5 6.9M-2.4 0.8L-11.1 3.6M-2.5 0.0L-11.7 0.0M-2.4 -0.8L-11.1 -3.6M-2.0 -1.5L-9.5 -6.9M-1.5 -2.0L-6.9 -9.5M-0.8 -2.4L-3.6 -11.1M-0.0 -2.5L-0.0 -11.7M0.8 -2.4L3.6 -11.1M1.5 -2.0L6.9 -9.5M2.0 -1.5L9.5 -6.9M2.4 -0.8L11.1 -3.6" stroke="#000" stroke-width=".9" fill="none"/><circle r="9.1" fill="none" stroke="#000" stroke-width="1" stroke-dasharray="2.2 1.2"/><circle r="6.4" fill="none" stroke="#000" stroke-width=".9" stroke-dasharray="1.6 1"/><circle r="3.9" fill="none" stroke="#000" stroke-width=".9"/><circle r="2.8" fill="#000"/></g>
<g transform="translate(648.8 463.6)"><circle r="11.7" fill="rgba(45,20,0,0.5)" stroke="#000" stroke-width="1.4"/><path d="M2.5 0.0L11.7 0.0M2.4 0.8L11.1 3.6M2.0 1.5L9.5 6.9M1.5 2.0L6.9 9.5M0.8 2.4L3.6 11.1M0.0 2.5L0.0 11.7M-0.8 2.4L-3.6 11.1M-1.5 2.0L-6.9 9.5M-2.0 1.5L-9.5 6.9M-2.4 0.8L-11.1 3.6M-2.5 0.0L-11.7 0.0M-2.4 -0.8L-11.1 -3.6M-2.0 -1.5L-9.5 -6.9M-1.5 -2.0L-6.9 -9.5M-0.8 -2.4L-3.6 -11.1M-0.0 -2.5L-0.0 -11.7M0.8 -2.4L3.6 -11.1M1.5 -2.0L6.9 -9.5M2.0 -1.5L9.5 -6.9M2.4 -0.8L11.1 -3.6" stroke="#000" stroke-width=".9" fill="none"/><circle r="9.1" fill="none" stroke="#000" stroke-width="1" stroke-dasharray="2.2 1.2"/><circle r="6.4" fill="none" stroke="#000" stroke-width=".9" stroke-dasharray="1.6 1"/><circle r="3.9" fill="none" stroke="#000" stroke-width=".9"/><circle r="2.8" fill="#000"/></g>
<g transform="translate(764.4 465.4)"><circle r="11.7" fill="rgba(45,20,0,0.5)" stroke="#000" stroke-width="1.4"/><path d="M2.5 0.0L11.7 0.0M2.4 0.8L11.1 3.6M2.0 1.5L9.5 6.9M1.5 2.0L6.9 9.5M0.8 2.4L3.6 11.1M0.0 2.5L0.0 11.7M-0.8 2.4L-3.6 11.1M-1.5 2.0L-6.9 9.5M-2.0 1.5L-9.5 6.9M-2.4 0.8L-11.1 3.6M-2.5 0.0L-11.7 0.0M-2.4 -0.8L-11.1 -3.6M-2.0 -1.5L-9.5 -6.9M-1.5 -2.0L-6.9 -9.5M-0.8 -2.4L-3.6 -11.1M-0.0 -2.5L-0.0 -11.7M0.8 -2.4L3.6 -11.1M1.5 -2.0L6.9 -9.5M2.0 -1.5L9.5 -6.9M2.4 -0.8L11.1 -3.6" stroke="#000" stroke-width=".9" fill="none"/><circle r="9.1" fill="none" stroke="#000" stroke-width="1" stroke-dasharray="2.2 1.2"/><circle r="6.4" fill="none" stroke="#000" stroke-width=".9" stroke-dasharray="1.6 1"/><circle r="3.9" fill="none" stroke="#000" stroke-width=".9"/><circle r="2.8" fill="#000"/></g>
<g transform="translate(945.5 387.7)"><circle r="11.7" fill="rgba(0,0,60,0.55)" stroke="#000" stroke-width="1.4"/><path d="M2.5 0.0L11.7 0.0M2.4 0.8L11.1 3.6M2.0 1.5L9.5 6.9M1.5 2.0L6.9 9.5M0.8 2.4L3.6 11.1M0.0 2.5L0.0 11.7M-0.8 2.4L-3.6 11.1M-1.5 2.0L-6.9 9.5M-2.0 1.5L-9.5 6.9M-2.4 0.8L-11.1 3.6M-2.5 0.0L-11.7 0.0M-2.4 -0.8L-11.1 -3.6M-2.0 -1.5L-9.5 -6.9M-1.5 -2.0L-6.9 -9.5M-0.8 -2.4L-3.6 -11.1M-0.0 -2.5L-0.0 -11.7M0.8 -2.4L3.6 -11.1M1.5 -2.0L6.9 -9.5M2.0 -1.5L9.5 -6.9M2.4 -0.8L11.1 -3.6" stroke="#000" stroke-width=".9" fill="none"/><circle r="9.1" fill="none" stroke="#000" stroke-width="1" stroke-dasharray="2.2 1.2"/><circle r="6.4" fill="none" stroke="#000" stroke-width=".9" stroke-dasharray="1.6 1"/><circle r="3.9" fill="none" stroke="#000" stroke-width=".9"/><circle r="2.8" fill="#000"/></g>
<g transform="translate(951.0 425.0)"><circle r="11.7" fill="rgba(0,0,60,0.55)" stroke="#000" stroke-width="1.4"/><path d="M2.5 0.0L11.7 0.0M2.4 0.8L11.1 3.6M2.0 1.5L9.5 6.9M1.5 2.0L6.9 9.5M0.8 2.4L3.6 11.1M0.0 2.5L0.0 11.7M-0.8 2.4L-3.6 11.1M-1.5 2.0L-6.9 9.5M-2.0 1.5L-9.5 6.9M-2.4 0.8L-11.1 3.6M-2.5 0.0L-11.7 0.0M-2.4 -0.8L-11.1 -3.6M-2.0 -1.5L-9.5 -6.9M-1.5 -2.0L-6.9 -9.5M-0.8 -2.4L-3.6 -11.1M-0.0 -2.5L-0.0 -11.7M0.8 -2.4L3.6 -11.1M1.5 -2.0L6.9 -9.5M2.0 -1.5L9.5 -6.9M2.4 -0.8L11.1 -3.6" stroke="#000" stroke-width=".9" fill="none"/><circle r="9.1" fill="none" stroke="#000" stroke-width="1" stroke-dasharray="2.2 1.2"/><circle r="6.4" fill="none" stroke="#000" stroke-width=".9" stroke-dasharray="1.6 1"/><circle r="3.9" fill="none" stroke="#000" stroke-width=".9"/><circle r="2.8" fill="#000"/></g>
<g transform="translate(792.2 466.3)"><circle r="11.7" fill="rgba(0,0,60,0.55)" stroke="#000" stroke-width="1.4"/><path d="M2.5 0.0L11.7 0.0M2.4 0.8L11.1 3.6M2.0 1.5L9.5 6.9M1.5 2.0L6.9 9.5M0.8 2.4L3.6 11.1M0.0 2.5L0.0 11.7M-0.8 2.4L-3.6 11.1M-1.5 2.0L-6.9 9.5M-2.0 1.5L-9.5 6.9M-2.4 0.8L-11.1 3.6M-2.5 0.0L-11.7 0.0M-2.4 -0.8L-11.1 -3.6M-2.0 -1.5L-9.5 -6.9M-1.5 -2.0L-6.9 -9.5M-0.8 -2.4L-3.6 -11.1M-0.0 -2.5L-0.0 -11.7M0.8 -2.4L3.6 -11.1M1.5 -2.0L6.9 -9.5M2.0 -1.5L9.5 -6.9M2.4 -0.8L11.1 -3.6" stroke="#000" stroke-width=".9" fill="none"/><circle r="9.1" fill="none" stroke="#000" stroke-width="1" stroke-dasharray="2.2 1.2"/><circle r="6.4" fill="none" stroke="#000" stroke-width=".9" stroke-dasharray="1.6 1"/><circle r="3.9" fill="none" stroke="#000" stroke-width=".9"/><circle r="2.8" fill="#000"/></g>
<text x="0" y="0" transform="translate(536 236) rotate(78)" font-size="7" font-family="Liberation Sans, sans-serif" fill="#000" letter-spacing="-0.3">1000</text>
<text x="0" y="0" transform="translate(648 243) rotate(35)" font-size="7" font-family="Liberation Sans, sans-serif" fill="#000" letter-spacing="-0.3">100</text>
<text x="0" y="0" transform="translate(674 249) rotate(-70)" font-size="7" font-family="Liberation Sans, sans-serif" fill="#000" letter-spacing="-0.3">25</text>
<text x="0" y="0" transform="translate(640 273) rotate(-20)" font-size="7" font-family="Liberation Sans, sans-serif" fill="#000" letter-spacing="-0.3">200</text>
<text x="0" y="0" transform="translate(646 286) rotate(-30)" font-size="7" font-family="Liberation Sans, sans-serif" fill="#000" letter-spacing="-0.3">500</text>
<text x="0" y="0" transform="translate(623 303) rotate(-15)" font-size="7" font-family="Liberation Sans, sans-serif" fill="#000" letter-spacing="-0.3">1000</text>
<text x="0" y="0" transform="translate(990 252) rotate(-20)" font-size="7" font-family="Liberation Sans, sans-serif" fill="#000" letter-spacing="-0.3">25</text>
<text x="0" y="0" transform="translate(998 262) rotate(-10)" font-size="7" font-family="Liberation Sans, sans-serif" fill="#000" letter-spacing="-0.3">100</text>
<text x="0" y="0" transform="translate(994 286) rotate(-5)" font-size="7" font-family="Liberation Sans, sans-serif" fill="#000" letter-spacing="-0.3">300</text>
<text x="0" y="0" transform="translate(987 313) rotate(35)" font-size="7" font-family="Liberation Sans, sans-serif" fill="#000" letter-spacing="-0.3">1000</text>
<text x="0" y="0" transform="translate(1026 339) rotate(-60)" font-size="7" font-family="Liberation Sans, sans-serif" fill="#000" letter-spacing="-0.3">500</text>
<text x="0" y="0" transform="translate(902 290) rotate(-45)" font-size="7" font-family="Liberation Sans, sans-serif" fill="#000" letter-spacing="-0.3">50</text>
<text x="0" y="0" transform="translate(466 489) rotate(25)" font-size="7" font-family="Liberation Sans, sans-serif" fill="#000" letter-spacing="-0.3">1000</text>
<text x="0" y="0" transform="translate(958 395) rotate(70)" font-size="7" font-family="Liberation Sans, sans-serif" fill="#000" letter-spacing="-0.3">500</text>
<text x="0" y="0" transform="translate(973 478) rotate(75)" font-size="7" font-family="Liberation Sans, sans-serif" fill="#000" letter-spacing="-0.3">500</text>
<text x="0" y="0" transform="translate(951 452) rotate(30)" font-size="7" font-family="Liberation Sans, sans-serif" fill="#000" letter-spacing="-0.3">50</text>
<text x="0" y="0" transform="translate(969 518) rotate(-65)" font-size="7" font-family="Liberation Sans, sans-serif" fill="#000" letter-spacing="-0.3">300</text>
<text x="0" y="0" transform="translate(990 509) rotate(30)" font-size="7" font-family="Liberation Sans, sans-serif" fill="#000" letter-spacing="-0.3">25</text>
<text x="0" y="0" transform="translate(742 480) rotate(0)" font-size="6" font-family="Liberation Sans, sans-serif" fill="#000" letter-spacing="-0.3">1500</text>
</g>
<rect x="458.5" y="228.5" width="577.8" height="324.29999999999995" fill="none" stroke="#000" stroke-width="1.1"/>
<path d="M458.5 552.5V535" stroke="#20c020" stroke-width="1.2"/><path d="M458.5 552.5H476" stroke="#e02020" stroke-width="1.2"/><circle cx="458.5" cy="552.5" r="1.5" fill="#2020ff"/>
<rect x="412" y="74" width="663" height="22.500" fill="#181818"/>
<rect x="412.500" y="74.500" width="57" height="22" fill="#050505" stroke="#2a2a2a" stroke-width="1"/>
<rect x="797" y="74.500" width="26" height="22" fill="#050505" stroke="#333" stroke-width="1"/>
<g stroke="#2a2a2a" stroke-width="1"><path d="M710.500 75v21M762 75v21M843.500 75v21M1031.500 75v21"/></g>
<g font-family="Liberation Sans, sans-serif" font-size="10" fill="#ececec" letter-spacing="-0.550"><text x="443" y="89">Site 1</text><text x="502.500" y="89">Parking area</text><text x="580" y="89">building E</text><text x="666.500" y="89">Storey 1</text></g>
<!-- site icon -->
<path d="M420 92l3.500-3h11l-3.500 3z" fill="#20b020"/><rect x="424" y="80" width="6" height="9" fill="#c8c8c8"/><path d="M430 81l2-1.200v8l-2 1.200z" fill="#888"/><circle cx="434" cy="84.500" r="1.600" fill="#ddd"/>
<!-- parking icon -->
<path d="M478 92l3.500-3h7l-3.500 3z" fill="#20b020"/><path d="M485.500 92l3.500-3h8l-3.500 3z" fill="#e0d020"/><rect x="482" y="80" width="6" height="9" fill="#c8c8c8"/><path d="M488 81l2-1.200v8l-2 1.200z" fill="#888"/>
<!-- building E -->
<g transform="translate(561.500 78)"><path d="M1 3.500l3-3h9.500v11l-3 3.500h-9.500z" fill="#20a030" stroke="#d0e8d0" stroke-width=".8"/><path d="M1 7h9.500l3-3M1 10.500h9.500l3-3M10.500 3.500v11.500M1 3.500h9.500l3-3" fill="none" stroke="#d0e8d0" stroke-width=".8"/></g>
<path d="M630 85h5l-2.500 3z" fill="#666"/>
<!-- storey -->
<g transform="translate(647 78)"><path d="M1 3.500l3-3h10.500v11l-3 3.500h-10.500z" fill="#1c1c1c" stroke="#d0d0d0" stroke-width=".8"/><path d="M1 8h10.500l3-3v3l-3 3h-10.500z" fill="#20a030"/><path d="M1 3.500h10.500l3-3M11.500 3.500v11.500M1 5.500h10.500l3-3M1 12.500h10.500l3-3" fill="none" stroke="#d0d0d0" stroke-width=".7"/></g>
<!-- dashed icon -->
<g stroke="#c0c0c0" stroke-width="1.100" fill="none"><path d="M723.500 82v-3.500h4M723.500 85v4M723.500 92.500h4M731 92.500h4M738 89v3.500h-3M726 85h8.500v3.500"/></g>
<path d="M747.500 85h5l-2.500 3z" fill="#333"/>
<!-- green cube -->
<path d="M775 82l3-3h11v11l-3 3h-11z" fill="#18a018"/><path d="M775 82h11v11M786 82l3-3" fill="none" stroke="#0c700c" stroke-width="1"/>
<!-- L -->
<path d="M803.500 80h6v7h7.500v6h-13.500z" fill="#18a018" stroke="#50c850" stroke-width=".8"/>
<path d="M828 81.500v7l4-3.500z" fill="#8a8a8a"/>
<!-- focus -->
<g stroke="#f0f0f0" stroke-width="1.500" fill="none"><path d="M859.500 83v-4.500h4.500M873.500 83v-4.500h-4.500M859.500 88v4.500h4.500M873.500 88v4.500h-4.500"/></g><rect x="863.500" y="82.500" width="6" height="6" fill="#f0f0f0"/>
<!-- measure -->
<g stroke="#e8e8e8" stroke-width="1.200" fill="none"><path d="M892.500 79.500v5M908 79.500v5M894 82h12.500"/><path d="M896.500 80l-2.500 2 2.500 2M904 80l2.500 2-2.500 2" stroke-width="1"/></g>
<g stroke="#999" stroke-width="1" fill="none"><path d="M892.500 93v-4h15.500v4M896.300 89v2.500M900.200 89v2.500M904.100 89v2.500"/></g>
<!-- axis -->
<g stroke="#f0f0f0" stroke-width="1.300" fill="none"><path d="M928.500 80v6M933 91.500h5"/><path d="M926.500 82l2-2.500 2 2.500M936.500 89.500l2.500 2-2.500 2" stroke-width="1"/></g><rect x="927.300" y="90.300" width="2.500" height="2.500" fill="#f0f0f0"/>
<!-- monitor -->
<rect x="1049.500" y="80.500" width="12.500" height="9" rx="1.500" fill="none" stroke="#f0f0f0" stroke-width="1.500"/><path d="M1052.500 92h6.500" stroke="#f0f0f0" stroke-width="1.500"/>

<rect x="408" y="680.500" width="670" height="26" fill="#0a0a0a"/><rect x="408" y="680.500" width="670" height="1.200" fill="#000"/><g font-family="Liberation Sans, sans-serif" letter-spacing="-0.500"><rect x="447.2" y="688" width="21.3" height="12" fill="#000000"/><text x="457.7" y="697.200" text-anchor="middle" font-size="8.5" fill="#1c1c1c" font-weight="bold">0.10</text><rect x="468.2" y="688" width="21.3" height="12" fill="#040404"/><text x="478.7" y="697.200" text-anchor="middle" font-size="8.5" fill="#1c1c1c" font-weight="bold">1.00</text><rect x="489.2" y="688" width="21.3" height="12" fill="#0a0a1c"/><text x="499.7" y="697.200" text-anchor="middle" font-size="8.5" fill="#222238" font-weight="bold">1.21</text><rect x="510.2" y="688" width="21.3" height="12" fill="#180a24"/><text x="520.7" y="697.200" text-anchor="middle" font-size="8.5" fill="#32203a" font-weight="bold">1.46</text><rect x="531.2" y="688" width="21.3" height="12" fill="#380a1c"/><text x="541.7" y="697.200" text-anchor="middle" font-size="8.5" fill="#4c2030" font-weight="bold">1.77</text><rect x="552.2" y="688" width="21.3" height="12" fill="#460a56"/><text x="562.7" y="697.200" text-anchor="middle" font-size="8.5" fill="#5a2068" font-weight="bold">2.15</text><rect x="573.2" y="688" width="21.3" height="12" fill="#3a1aff"/><text x="583.7" y="697.200" text-anchor="middle" font-size="8.5" fill="#000" font-weight="bold">2.61</text><rect x="594.2" y="688" width="21.3" height="12" fill="#6a0a8a"/><text x="604.7" y="697.200" text-anchor="middle" font-size="8.5" fill="#000" font-weight="bold">3.16</text><rect x="615.2" y="688" width="21.3" height="12" fill="#2a2aff"/><text x="625.7" y="697.200" text-anchor="middle" font-size="8.5" fill="#000" font-weight="bold">3.83</text><rect x="636.2" y="688" width="21.3" height="12" fill="#1a1ae8"/><text x="646.7" y="697.200" text-anchor="middle" font-size="8.5" fill="#000" font-weight="bold">4.64</text><rect x="657.2" y="688" width="21.3" height="12" fill="#0a5aff"/><text x="667.7" y="697.200" text-anchor="middle" font-size="8.5" fill="#000" font-weight="bold">5.62</text><rect x="678.2" y="688" width="21.3" height="12" fill="#2a6ae8"/><text x="688.7" y="697.200" text-anchor="middle" font-size="8.5" fill="#000" font-weight="bold">6.81</text><rect x="699.2" y="688" width="21.3" height="12" fill="#00e8e8"/><text x="709.7" y="697.200" text-anchor="middle" font-size="8.5" fill="#000" font-weight="bold">8.25</text><rect x="720.2" y="688" width="21.3" height="12" fill="#008a6a"/><text x="730.7" y="697.200" text-anchor="middle" font-size="8.5" fill="#000" font-weight="bold">10.0</text><rect x="741.2" y="688" width="21.3" height="12" fill="#00e85a"/><text x="751.7" y="697.200" text-anchor="middle" font-size="8.5" fill="#000" font-weight="bold">12.1</text><rect x="762.2" y="688" width="21.3" height="12" fill="#00e800"/><text x="772.7" y="697.200" text-anchor="middle" font-size="8.5" fill="#000" font-weight="bold">14.6</text><rect x="783.2" y="688" width="21.3" height="12" fill="#3ac800"/><text x="793.7" y="697.200" text-anchor="middle" font-size="8.5" fill="#000" font-weight="bold">17.7</text><rect x="804.2" y="688" width="21.3" height="12" fill="#1aa81a"/><text x="814.7" y="697.200" text-anchor="middle" font-size="8.5" fill="#000" font-weight="bold">21.5</text><rect x="825.2" y="688" width="21.3" height="12" fill="#003a00"/><text x="835.7" y="697.200" text-anchor="middle" font-size="8.5" fill="#0a1a0a" font-weight="bold">26.1</text><rect x="846.2" y="688" width="21.3" height="12" fill="#0a6a1a"/><text x="856.7" y="697.200" text-anchor="middle" font-size="8.5" fill="#000" font-weight="bold">31.6</text><rect x="867.2" y="688" width="21.3" height="12" fill="#1a00e8"/><text x="877.7" y="697.200" text-anchor="middle" font-size="8.5" fill="#000" font-weight="bold">500</text><rect x="888.2" y="688" width="21.3" height="12" fill="#00a8ff"/><text x="898.7" y="697.200" text-anchor="middle" font-size="7.5" fill="#000" font-weight="bold">1000</text><rect x="909.2" y="688" width="21.3" height="12" fill="#6a00ff"/><text x="919.7" y="697.200" text-anchor="middle" font-size="7.5" fill="#000" font-weight="bold">1500</text><rect x="930.2" y="688" width="21.3" height="12" fill="#ff0000"/><text x="940.7" y="697.200" text-anchor="middle" font-size="7.5" fill="#000" font-weight="bold">1800</text><rect x="951.2" y="688" width="21.3" height="12" fill="#ff6a00"/><text x="961.7" y="697.200" text-anchor="middle" font-size="7.5" fill="#000" font-weight="bold">2000</text><rect x="972.2" y="688" width="21.3" height="12" fill="#ff5000"/><text x="982.7" y="697.200" text-anchor="middle" font-size="7.5" fill="#000" font-weight="bold">2200</text><rect x="993.2" y="688" width="21.3" height="12" fill="#ff9a00"/><text x="1003.7" y="697.200" text-anchor="middle" font-size="7.5" fill="#000" font-weight="bold">2500</text><rect x="1014.2" y="688" width="21.3" height="12" fill="#ffcc44"/><text x="1024.7" y="697.200" text-anchor="middle" font-size="7.5" fill="#000" font-weight="bold">2800</text><rect x="1035.2" y="688" width="21.3" height="12" fill="#ff0040"/><text x="1045.7" y="697.200" text-anchor="middle" font-size="7.5" fill="#000" font-weight="bold">3000</text><rect x="1056.2" y="688" width="16.3" height="12" fill="#e0e0e0"/><text x="1064.2" y="697.200" text-anchor="middle" font-size="6.5" fill="#000" font-weight="bold">1500</text></g><g transform="translate(428.500 691)"><circle r="2.600" fill="none" stroke="#f4f4f4" stroke-width="1.500"/><g stroke="#f4f4f4" stroke-width="1.400"><path d="M0-5v1.800M0 5v-1.800M-5 0h1.800M5 0h-1.800M-3.500-3.500l1.300 1.300M3.500 3.500l-1.300-1.300M-3.500 3.500l1.300-1.300M3.500-3.500l-1.300 1.300"/></g></g><defs><linearGradient id="og" x1="0" x2="1"><stop offset="0" stop-color="#7a2000"/><stop offset=".5" stop-color="#ff5a00"/><stop offset="1" stop-color="#ffc040"/></linearGradient></defs><rect x="420.500" y="699" width="16" height="2" fill="url(#og)"/>
</svg></div>
<div id="status" class="a">
 <div class="t" style="left:6px;top:3px;color:#9a9a9a;letter-spacing:-0.7px;font-size:10.500px">DIAL<b style="color:#f0f0f0">ux</b> evo</div>
 <div class="t" style="left:1154.500px;top:3px;color:#e0e0e0;font-size:10.500px;letter-spacing:-0.4px">2 new messages</div>
 <div class="a" style="left:1230px;top:5px;width:39.500px;height:10px;background:#ff6a00"></div>
 <svg class="a" style="left:1128px;top:4px" width="13" height="12" viewBox="0 0 13 12"><path d="M1.500 1h8l2 2v8h-10z" fill="#e0e0e0"/><rect x="3.500" y="1" width="5" height="3.500" fill="#333"/><rect x="3.500" y="6.500" width="6" height="4.500" fill="#555"/></svg>
</div>

<div id="rpanel" class="a">
 <div class="hdr" style="left:1px;top:1px;width:202px;height:22px"></div>
 <div class="t" style="left:5px;top:6px;font-size:11.500px;color:#f4f4f4;letter-spacing:-0.5px">Results overview</div>
 <div class="a" style="left:1px;top:27.500px;width:202px;height:19px;background:#f8f800"></div>
 <div class="t" style="left:6.500px;top:31px;color:#000;font-weight:bold;letter-spacing:-0.85px">Active light scene: Obtrusive light scene</div>
 <div class="a" style="left:6px;top:53px;width:129px;height:16px;background:#101010"></div>
 <div class="t" style="left:9px;top:55px;color:#8a8a8a;font-style:italic">Search</div>
 <div class="a" style="left:4.500px;top:73.500px;width:182px;height:123px;border:1px solid #8c8c1c;background:#050505"></div>
 <div class="a" style="left:4.500px;top:73.500px;width:182px;height:16px;background:#f8f800"></div>
 <div class="t" style="left:26px;top:76px;color:#000;font-weight:bold;letter-spacing:-0.75px">Global obtrusive light results</div>
 <div class="a" style="left:187px;top:73px;width:11px;height:537px;background:#1c1c1c"></div><div class="a" style="left:187.500px;top:599.500px;width:10px;height:10px;background:#2a2a2a"></div>
 <div class="a" style="left:187.500px;top:73px;width:10px;height:292px;background:#444"></div>
 <div class="t" style="left:10px;top:108px;font-size:8px;font-style:italic;font-family:'Liberation Serif',serif;letter-spacing:0">R<span style="font-size:6.500px;font-style:normal;font-family:'Liberation Sans',sans-serif;position:relative;top:2px">UF</span></div>
 <div class="t" style="left:33px;top:109px">Upward flux ratio</div>
 <div class="a" style="left:6px;top:122.500px;width:180px;height:1px;background:#161616"></div>
 <div class="t" style="left:9px;top:129px">Flux ratio</div>
 <div class="t" style="left:9px;top:147px">R<span style="font-size:6.500px">UL</span></div><div class="t" style="left:173px;top:151px;width:13.500px;overflow:hidden">13.5</div>
 <div class="t" style="left:9px;top:163.500px">R<span style="font-size:6.500px">OLO</span></div><div class="t" style="left:173px;top:166px;width:13.500px;overflow:hidden">70.2</div>
 <div class="t" style="left:9px;top:180.500px">R<span style="font-size:6.500px">ULO</span></div><div class="t" style="left:173px;top:183px;width:13.500px;overflow:hidden">11.6</div>
 <div class="a" style="left:4.500px;top:197px;width:182px;height:57.500px;background:#1e1e1e"></div>
 <div class="t" style="left:25px;top:201.500px;color:#ddd">Lighting Calculation</div>
 <div class="t bb" style="left:58.500px;top:218px">Site</div>
 <div class="t bb" style="left:69px;top:238px">Parking area</div>
 <div class="t" style="left:73.500px;top:258.500px;width:113px;overflow:hidden">Obtrusive light calculation surf</div>
 <div class="a" style="left:63.500px;top:275px;width:123px;height:33px;background:#0e0e0e"></div>
 <div class="a" style="left:63.500px;top:291.500px;width:123px;height:1px;background:#1f1f1f"></div>
 <div class="a" style="left:63.500px;top:275px;width:1px;height:33px;background:#1f1f1f"></div><div class="a" style="left:79px;top:275px;width:1px;height:33px;background:#1f1f1f"></div><div class="a" style="left:127.500px;top:275px;width:1px;height:33px;background:#1f1f1f"></div><div class="a" style="left:176.500px;top:275px;width:1px;height:33px;background:#1f1f1f"></div>
 <div class="t" style="left:90px;top:278px;width:34px;text-align:right">39</div>
 <div class="t" style="left:90px;top:294.500px;width:34px;text-align:right">3743</div>
 <div class="t" style="left:65.500px;top:291px;font-size:12px;font-style:italic;font-family:'Liberation Serif',serif;letter-spacing:0">k<span style="font-size:9px;font-style:normal;font-family:'Liberation Sans',sans-serif;position:relative;top:2.500px">S</span></div>
 <div class="a" style="left:63.500px;top:308px;width:123px;height:178.500px;background:#141414"></div>
 <div class="a" style="left:63.500px;top:434.500px;width:123px;height:1px;background:#222"></div>
 <div class="t" style="left:66.500px;top:312px;font-weight:bold;letter-spacing:-0.5px">Obtrusive light...</div><div class="t" style="left:148px;top:312px;width:38.500px;overflow:hidden;color:#ccc">(Glare index</div>
 <div class="t r" style="top:333px">Actual</div><div class="t" style="left:181px;top:333px;width:5.500px;overflow:hidden">Ta</div>
 <div class="t" style="left:70.500px;top:349.500px">Average</div><div class="t r" style="top:349.500px">319</div>
 <div class="t" style="left:70.500px;top:366px">Min</div><div class="t r" style="top:366px">0.00</div>
 <div class="t" style="left:70.500px;top:382.500px">Max</div><div class="t r" style="top:382.500px">3743</div>
 <div class="t" style="left:70.500px;top:399px">Mean/Min</div><div class="t r" style="top:399px">-</div>
 <div class="t" style="left:70.500px;top:415.500px">Max/Min</div><div class="t r" style="top:415.500px">-</div>
 <div class="t" style="left:66.500px;top:440px;font-weight:bold;letter-spacing:-0.5px">Parameter</div>
 <div class="t" style="left:70.500px;top:459px">Height</div><div class="t" style="left:169px;top:459px;width:17.500px;overflow:hidden">0.000</div>
 <div class="t" style="left:70.500px;top:472px">Ambient luminance</div><div class="t" style="left:157px;top:472px;width:29.500px;overflow:hidden">0.10 cd/m²</div>
 <div class="t" style="left:72.500px;top:492.500px;width:114px;overflow:hidden">Obtrusive light calculation surf</div>
 <div class="a" style="left:63.500px;top:509px;width:123px;height:34px;background:#0e0e0e"></div>
 <div class="a" style="left:63.500px;top:526px;width:123px;height:1px;background:#1f1f1f"></div>
 <div class="a" style="left:63.500px;top:509px;width:1px;height:34px;background:#1f1f1f"></div><div class="a" style="left:79px;top:509px;width:1px;height:34px;background:#1f1f1f"></div><div class="a" style="left:127.500px;top:509px;width:1px;height:34px;background:#1f1f1f"></div><div class="a" style="left:176.500px;top:509px;width:1px;height:34px;background:#1f1f1f"></div>
 <div class="t" style="left:90px;top:512px;width:34px;text-align:right">38</div>
 <div class="t" style="left:90px;top:529px;width:34px;text-align:right">3912</div>
 <div class="t" style="left:65.500px;top:525.500px;font-size:12px;font-style:italic;font-family:'Liberation Serif',serif;letter-spacing:0">k<span style="font-size:9px;font-style:normal;font-family:'Liberation Sans',sans-serif;position:relative;top:2.500px">S</span></div>
 <div class="a" style="left:178px;top:527px;width:8.500px;height:15px;background:linear-gradient(135deg,#ff9a30 0%,#d04a00 45%,#ff7a10 60%,#c03a00 100%)"></div>
 <div class="a" style="left:4.500px;top:543.500px;width:182px;height:39px;background:#1e1e1e"></div>
 <div class="t bb" style="left:58.500px;top:546px">Building 11</div>
 <div class="t bb" style="left:64.500px;top:566px">Storey 1</div>
 <div class="t" style="left:72.500px;top:586.500px;width:114px;overflow:hidden">Obtrusive light calculation poi</div>
 <div class="a" style="left:4.500px;top:599px;width:182px;height:11px;background:#1c1c1c"></div>
 <div class="a" style="left:5px;top:599.500px;width:153px;height:10px;background:#444"></div>
 <div class="hdr" style="left:1px;top:614px;width:202px;height:18px"></div>
 <div class="t" style="left:20px;top:617px;color:#f4f4f4">Settings</div>
 <svg class="a" style="left:0;top:0" width="203" height="632" viewBox="1077 74 203 632"><g transform="translate(1088.500 298.5)"><path d="M-5 0c3-4 7-4 10 0-3 4-7 4-10 0z" fill="none" stroke="#f0f0f0" stroke-width="1.300"/><circle r="1.700" fill="#f0f0f0"/></g><g transform="translate(1088.500 318.5)"><path d="M-5 0c3-4 7-4 10 0-3 4-7 4-10 0z" fill="none" stroke="#f0f0f0" stroke-width="1.300"/><circle r="1.700" fill="#f0f0f0"/></g><g transform="translate(1088.500 338.5)"><path d="M-5 0c3-4 7-4 10 0-3 4-7 4-10 0z" fill="none" stroke="#f0f0f0" stroke-width="1.300"/><circle r="1.700" fill="#f0f0f0"/></g><g transform="translate(1088.500 572.5)"><path d="M-5 0c3-4 7-4 10 0-3 4-7 4-10 0z" fill="none" stroke="#f0f0f0" stroke-width="1.300"/><circle r="1.700" fill="#f0f0f0"/></g><g transform="translate(1088.500 626.5)"><path d="M-5 0c3-4 7-4 10 0-3 4-7 4-10 0z" fill="none" stroke="#f0f0f0" stroke-width="1.300"/><circle r="1.700" fill="#f0f0f0"/></g><g transform="translate(1088.500 646.5)"><path d="M-5 0c3-4 7-4 10 0-3 4-7 4-10 0z" fill="none" stroke="#f0f0f0" stroke-width="1.300"/><circle r="1.700" fill="#f0f0f0"/></g><g transform="translate(1088.500 666.5)"><path d="M-5 0c3-4 7-4 10 0-3 4-7 4-10 0z" fill="none" stroke="#f0f0f0" stroke-width="1.300"/><circle r="1.700" fill="#f0f0f0"/></g><path d="M1086 280.0h6l-3 3.500z" fill="#8a8a8a"/><path d="M1101.5 297.0h6l-3 3.500z" fill="#8a8a8a"/><path d="M1111.5 317.0h6l-3 3.500z" fill="#8a8a8a"/><path d="M1116.5 337.0h6l-3 3.500z" fill="#8a8a8a"/><path d="M1127.0 354.5v6l3.500-3z" fill="#aaa"/><path d="M1126.5 373.0h6l-3 3.500z" fill="#ccc"/><path d="M1114.5 571.0h6l-3 3.500z" fill="#8a8a8a"/><path d="M1127.0 588.5v6l3.500-3z" fill="#aaa"/><path d="M1127.0 605.5v6l3.500-3z" fill="#aaa"/><path d="M1101.5 625.0h6l-3 3.500z" fill="#8a8a8a"/><path d="M1106.5 645.0h6l-3 3.500z" fill="#8a8a8a"/><path d="M1114.5 665.0h6l-3 3.500z" fill="#8a8a8a"/><path d="M1132 342.5l4-3.500h7l-4 3.500z" fill="#d0d0d0"/><path d="M1138 334.5v6" stroke="#e01010" stroke-width="1.100"/><circle cx="1138" cy="340.0" r="1.300" fill="#e01010"/><path d="M1131 576.5l4-3.500h7l-4 3.500z" fill="#d0d0d0"/><path d="M1137 568.5v6" stroke="#e01010" stroke-width="1.100"/><circle cx="1137" cy="574.0" r="1.300" fill="#e01010"/><path d="M1131 670.5l4-3.500h7l-4 3.500z" fill="#d0d0d0"/><path d="M1137 662.5v6" stroke="#e01010" stroke-width="1.100"/><circle cx="1137" cy="668.0" r="1.300" fill="#e01010"/><path d="M1143.5 356.0h10v1.500h-10z" fill="#ff8a20"/><circle cx="1145.8" cy="358.3" r="2" fill="#e05a00"/><circle cx="1151.2" cy="358.3" r="2" fill="#e05a00"/><path d="M1143.5 590.0h10v1.500h-10z" fill="#ff8a20"/><circle cx="1145.8" cy="592.3" r="2" fill="#e05a00"/><circle cx="1151.2" cy="592.3" r="2" fill="#e05a00"/><path d="M1117 303l3-2.500h9.500l-3 2.500z" fill="#20b020"/><rect x="1120" y="293.500" width="5" height="7" fill="#c8c8c8"/><path d="M1125 294.500l1.500-1v6l-1.500 1z" fill="#888"/><circle cx="1128" cy="297" r="1.300" fill="#ddd"/><path d="M1127 323l3-2.500h5l-3 2.500z" fill="#20b020"/><path d="M1132 323l3-2.500h5l-3 2.500z" fill="#e0d020"/><rect x="1130" y="313.500" width="5" height="7" fill="#c8c8c8"/><path d="M1135 314.500l1.500-1v6l-1.500 1z" fill="#888"/><g transform="translate(1117 619)"><path d="M1 3l3-2.500h9v11l-3 3h-9z" fill="#20a030" stroke="#d0e8d0" stroke-width=".8"/><path d="M1 6.500h9l3-2.500M1 10h9l3-2.500M10 3v11.500M1 3h9l3-2.500" fill="none" stroke="#d0e8d0" stroke-width=".8"/></g><g transform="translate(1122 639)"><path d="M1 3l3-2.500h9v11l-3 3h-9z" fill="#222" stroke="#d0d0d0" stroke-width=".8"/><path d="M1 7h9l3-2.500v3l-3 2.500h-9z" fill="#20a030"/><path d="M1 3h9l3-2.500M10 3v11.500" fill="none" stroke="#d0d0d0" stroke-width=".8"/></g><circle cx="1206" cy="133.500" r="3" fill="none" stroke="#aaa" stroke-width="1.200"/><path d="M1204 136l-3 3.500" stroke="#aaa" stroke-width="1.400"/><path d="M1088 153.500h7l-3.500 4z" fill="#000"/><g stroke="#bbb" stroke-width="1" fill="#bbb"><path d="M1268 697h5M1273 694v6M1275 695.500v3"/></g><path d="M1088.0 694v6l3.500-3z" fill="#777"/></svg>
</div>
</body></html>
